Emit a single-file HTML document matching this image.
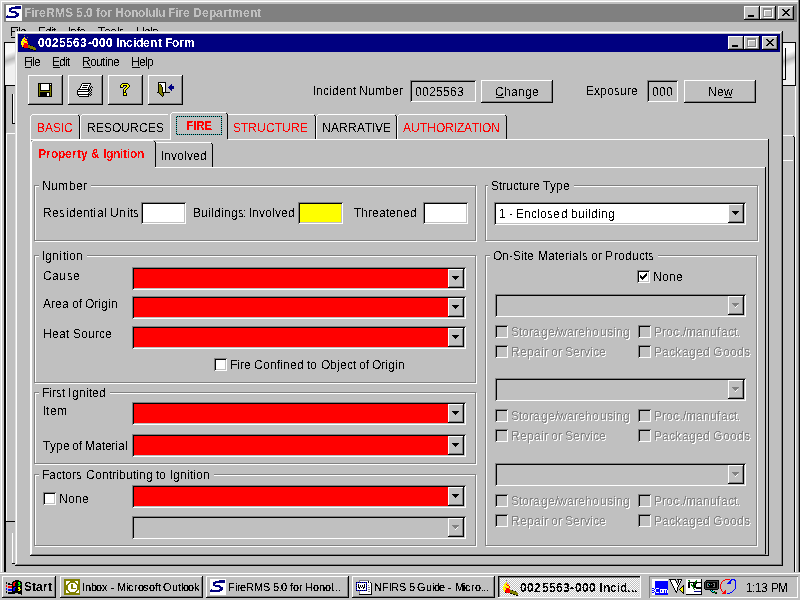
<!DOCTYPE html><html><head><meta charset="utf-8"><style>
*{margin:0;padding:0}
html,body{width:800px;height:600px;overflow:hidden;background:#c0c0c0}
body{position:relative;font-family:"Liberation Sans",sans-serif;font-size:12px}
div{position:absolute;box-sizing:border-box}
.t{white-space:nowrap;line-height:14px;height:14px;filter:url(#th)}
.t i{display:inline-block;font-style:normal;overflow:visible}
.rz{box-shadow:inset -1px -1px #000,inset 1px 1px #fff,inset -2px -2px #808080}
.sk{box-shadow:inset 1px 1px #808080,inset -1px -1px #fff,inset 2px 2px #000,inset -2px -2px #c0c0c0}
.gb{border:1px solid #808080;box-shadow:inset 1px 1px #fff,1px 1px #fff}
.ds{color:#808080;text-shadow:1px 1px #fff}
svg{position:absolute;overflow:visible}
</style></head><body><svg width="0" height="0" style="position:absolute"><filter id="th" x="-5%" y="-5%" width="110%" height="110%" color-interpolation-filters="sRGB"><feComponentTransfer><feFuncA type="discrete" tableValues="0 1"/></feComponentTransfer></filter><filter id="th2" x="-5%" y="-5%" width="110%" height="110%" color-interpolation-filters="sRGB"><feComponentTransfer><feFuncA type="discrete" tableValues="0 0 1 1 1"/></feComponentTransfer></filter></svg><div style="left:0px;top:0px;width:800px;height:1px;background:#dfdfdf;"></div>
<div style="left:0px;top:0px;width:1px;height:573px;background:#dfdfdf;"></div>
<div style="left:1px;top:1px;width:798px;height:1px;background:#fff;"></div>
<div style="left:1px;top:1px;width:1px;height:572px;background:#fff;"></div>
<div style="left:4px;top:4px;width:793px;height:18px;background:#808080;"></div>
<svg style="left:6px;top:5px" width="16" height="16" shape-rendering="crispEdges"><rect x="0" y="0" width="16" height="1" fill="#fff"/><rect x="0" y="1" width="9" height="1" fill="#fff"/><rect x="9" y="1" width="6" height="1" fill="#000080"/><rect x="15" y="1" width="1" height="1" fill="#fff"/><rect x="0" y="2" width="5" height="1" fill="#fff"/><rect x="5" y="2" width="10" height="1" fill="#000080"/><rect x="15" y="2" width="1" height="1" fill="#fff"/><rect x="0" y="3" width="3" height="1" fill="#fff"/><rect x="3" y="3" width="12" height="1" fill="#000080"/><rect x="15" y="3" width="1" height="1" fill="#fff"/><rect x="0" y="4" width="3" height="1" fill="#fff"/><rect x="3" y="4" width="3" height="1" fill="#000080"/><rect x="6" y="4" width="10" height="1" fill="#fff"/><rect x="0" y="5" width="3" height="1" fill="#fff"/><rect x="3" y="5" width="2" height="1" fill="#000080"/><rect x="5" y="5" width="11" height="1" fill="#fff"/><rect x="0" y="6" width="3" height="1" fill="#fff"/><rect x="3" y="6" width="7" height="1" fill="#000080"/><rect x="10" y="6" width="6" height="1" fill="#fff"/><rect x="0" y="7" width="5" height="1" fill="#fff"/><rect x="5" y="7" width="6" height="1" fill="#000080"/><rect x="11" y="7" width="5" height="1" fill="#fff"/><rect x="0" y="8" width="9" height="1" fill="#fff"/><rect x="9" y="8" width="4" height="1" fill="#000080"/><rect x="13" y="8" width="3" height="1" fill="#fff"/><rect x="0" y="9" width="10" height="1" fill="#fff"/><rect x="10" y="9" width="3" height="1" fill="#000080"/><rect x="13" y="9" width="3" height="1" fill="#fff"/><rect x="0" y="10" width="1" height="1" fill="#fff"/><rect x="1" y="10" width="1" height="1" fill="#000080"/><rect x="2" y="10" width="7" height="1" fill="#fff"/><rect x="9" y="10" width="4" height="1" fill="#000080"/><rect x="13" y="10" width="3" height="1" fill="#fff"/><rect x="0" y="11" width="12" height="1" fill="#000080"/><rect x="12" y="11" width="4" height="1" fill="#fff"/><rect x="0" y="12" width="10" height="1" fill="#000080"/><rect x="10" y="12" width="6" height="1" fill="#fff"/><rect x="0" y="13" width="16" height="1" fill="#fff"/><rect x="0" y="14" width="16" height="1" fill="#fff"/><rect x="0" y="15" width="16" height="1" fill="#fff"/></svg>
<div class="t " style="left:24px;top:6px;color:#c0c0c0;font-weight:bold;"><i style="width:7px">F</i><i style="width:3px">i</i><i style="width:5px">r</i><i style="width:7px">e</i><i style="width:9px">R</i><i style="width:10px">M</i><i style="width:8px">S</i><i style="width:3px">&nbsp;</i><i style="width:7px">5</i><i style="width:3px">.</i><i style="width:7px">0</i><i style="width:3px">&nbsp;</i><i style="width:4px">f</i><i style="width:7px">o</i><i style="width:5px">r</i><i style="width:3px">&nbsp;</i><i style="width:9px">H</i><i style="width:7px">o</i><i style="width:7px">n</i><i style="width:7px">o</i><i style="width:3px">l</i><i style="width:7px">u</i><i style="width:3px">l</i><i style="width:7px">u</i><i style="width:3px">&nbsp;</i><i style="width:7px">F</i><i style="width:3px">i</i><i style="width:5px">r</i><i style="width:7px">e</i><i style="width:3px">&nbsp;</i><i style="width:9px">D</i><i style="width:7px">e</i><i style="width:7px">p</i><i style="width:7px">a</i><i style="width:5px">r</i><i style="width:4px">t</i><i style="width:11px">m</i><i style="width:7px">e</i><i style="width:7px">n</i><i style="width:4px">t</i></div>
<div class="rz" style="left:744px;top:6px;width:16px;height:14px;background:#c0c0c0;"></div>
<div style="left:748px;top:15px;width:6px;height:2px;background:#000;"></div>
<div class="rz" style="left:760px;top:6px;width:16px;height:14px;background:#c0c0c0;"></div>
<div style="left:764px;top:9px;width:9px;height:9px;border:1px solid #fff;border-top-width:2px"></div>
<div style="left:763px;top:8px;width:9px;height:9px;border:1px solid #808080;border-top-width:2px"></div>
<div class="rz" style="left:778px;top:6px;width:16px;height:14px;background:#c0c0c0;"></div>
<svg style="left:782px;top:9px" width="8" height="7" shape-rendering="crispEdges"><rect x="0" y="0" width="2" height="1" fill="#000"/><rect x="6" y="0" width="2" height="1" fill="#000"/><rect x="1" y="1" width="2" height="1" fill="#000"/><rect x="5" y="1" width="2" height="1" fill="#000"/><rect x="2" y="2" width="4" height="1" fill="#000"/><rect x="3" y="3" width="2" height="1" fill="#000"/><rect x="2" y="4" width="4" height="1" fill="#000"/><rect x="1" y="5" width="2" height="1" fill="#000"/><rect x="5" y="5" width="2" height="1" fill="#000"/><rect x="0" y="6" width="2" height="1" fill="#000"/><rect x="6" y="6" width="2" height="1" fill="#000"/></svg>
<div class="t " style="left:10px;top:25px;color:#000;"><i style="width:6px">F</i><i style="width:2px">i</i><i style="width:2px">l</i><i style="width:6px">e</i></div>
<div class="t " style="left:38px;top:25px;color:#000;"><i style="width:7px">E</i><i style="width:6px">d</i><i style="width:2px">i</i><i style="width:2px">t</i></div>
<div class="t " style="left:68px;top:25px;color:#000;"><i style="width:2px">I</i><i style="width:7px">n</i><i style="width:2px">f</i><i style="width:6px">o</i></div>
<div class="t " style="left:98px;top:25px;color:#000;"><i style="width:6px">T</i><i style="width:6px">o</i><i style="width:7px">o</i><i style="width:2px">l</i><i style="width:5px">s</i></div>
<div class="t " style="left:136px;top:25px;color:#000;"><i style="width:8px">H</i><i style="width:6px">e</i><i style="width:2px">l</i><i style="width:6px">p</i></div>
<div style="left:11px;top:37px;width:6px;height:1px;background:#000;"></div>
<div style="left:4px;top:42px;width:12px;height:1px;background:#000;"></div>
<div style="left:4px;top:42px;width:1px;height:530px;background:#000;"></div>
<div style="left:5px;top:86px;width:1px;height:486px;background:#000;"></div>
<div style="left:5px;top:43px;width:11px;height:42px;background:linear-gradient(160deg,#f4f4f4 0%,#fafafa 25%,#b8b8b8 40%,#f0f0f0 55%,#f0f0f0 100%)"></div>
<div style="left:4px;top:85px;width:12px;height:1px;background:#000;"></div>
<div style="left:6px;top:133px;width:1px;height:388px;background:#fff;"></div>
<div style="left:6px;top:133px;width:10px;height:1px;background:#fff;"></div>
<div style="left:6px;top:521px;width:10px;height:1px;background:#000;"></div>
<div style="left:12px;top:94px;width:1px;height:29px;background:#000;"></div>
<div style="left:13px;top:94px;width:1px;height:29px;background:#fff;"></div>
<div style="left:12px;top:123px;width:3px;height:1px;background:#000;"></div>
<div style="left:12px;top:533px;width:1px;height:30px;background:#fff;"></div>
<div style="left:12px;top:563px;width:3px;height:1px;background:#000;"></div>
<div style="left:783px;top:42px;width:13px;height:1px;background:#000;"></div>
<div style="left:795px;top:42px;width:1px;height:44px;background:#000;"></div>
<div style="left:783px;top:85px;width:12px;height:1px;background:#000;"></div>
<div style="left:783px;top:43px;width:12px;height:42px;background:linear-gradient(160deg,#f4f4f4 0%,#fafafa 25%,#b8b8b8 40%,#f0f0f0 55%,#f0f0f0 100%)"></div>
<div style="left:785px;top:48px;width:1px;height:32px;background:#000;"></div>
<div style="left:783px;top:79px;width:3px;height:1px;background:#000;"></div>
<div style="left:795px;top:86px;width:1px;height:51px;background:#fff;"></div>
<div style="left:783px;top:135px;width:10px;height:1px;background:#fff;"></div>
<div style="left:793px;top:136px;width:1px;height:1px;background:#000;"></div>
<div style="left:794px;top:137px;width:1px;height:435px;background:#000;"></div>
<div style="left:795px;top:137px;width:1px;height:435px;background:#fff;"></div>
<div style="left:783px;top:160px;width:10px;height:1px;background:#fff;"></div>
<div style="left:798px;top:0px;width:1px;height:573px;background:#808080;"></div>
<div style="left:799px;top:0px;width:1px;height:573px;background:#000;"></div>
<div style="left:15px;top:31px;width:768px;height:535px;background:#c0c0c0;"></div>
<div style="left:15px;top:31px;width:767px;height:1px;background:#dfdfdf;"></div>
<div style="left:15px;top:31px;width:1px;height:534px;background:#dfdfdf;"></div>
<div style="left:16px;top:32px;width:765px;height:1px;background:#fff;"></div>
<div style="left:16px;top:32px;width:1px;height:532px;background:#fff;"></div>
<div style="left:781px;top:32px;width:1px;height:533px;background:#808080;"></div>
<div style="left:16px;top:564px;width:766px;height:1px;background:#808080;"></div>
<div style="left:782px;top:31px;width:1px;height:535px;background:#000;"></div>
<div style="left:15px;top:565px;width:768px;height:1px;background:#000;"></div>
<div style="left:18px;top:34px;width:762px;height:18px;background:#000080;"></div>
<svg style="left:20px;top:34px" width="16" height="17" shape-rendering="crispEdges"><rect x="4" y="1" width="1" height="1" fill="#808080"/><rect x="4" y="3" width="1" height="1" fill="#ff0"/><rect x="7" y="3" width="1" height="1" fill="#808080"/><rect x="3" y="4" width="2" height="1" fill="#ff0"/><rect x="5" y="4" width="1" height="1" fill="#f0f"/><rect x="2" y="5" width="2" height="1" fill="#ff0"/><rect x="4" y="5" width="1" height="1" fill="#f00"/><rect x="5" y="5" width="2" height="1" fill="#ff0"/><rect x="2" y="6" width="3" height="1" fill="#ff0"/><rect x="5" y="6" width="2" height="1" fill="#f00"/><rect x="1" y="7" width="6" height="1" fill="#ff0"/><rect x="7" y="7" width="1" height="1" fill="#f00"/><rect x="1" y="8" width="2" height="1" fill="#ff0"/><rect x="3" y="8" width="1" height="1" fill="#f0f"/><rect x="4" y="8" width="3" height="1" fill="#ff0"/><rect x="7" y="8" width="1" height="1" fill="#f00"/><rect x="1" y="9" width="3" height="1" fill="#ff0"/><rect x="4" y="9" width="3" height="1" fill="#f00"/><rect x="7" y="9" width="1" height="1" fill="#ff0"/><rect x="1" y="10" width="3" height="1" fill="#ff0"/><rect x="4" y="10" width="4" height="1" fill="#f00"/><rect x="2" y="11" width="1" height="1" fill="#ff0"/><rect x="3" y="11" width="5" height="1" fill="#f00"/><rect x="8" y="11" width="2" height="1" fill="#808000"/><rect x="10" y="11" width="1" height="1" fill="#000"/><rect x="2" y="12" width="1" height="1" fill="#ff0"/><rect x="3" y="12" width="5" height="1" fill="#f00"/><rect x="8" y="12" width="5" height="1" fill="#808000"/><rect x="13" y="12" width="1" height="1" fill="#000"/><rect x="3" y="13" width="1" height="1" fill="#000"/><rect x="4" y="13" width="4" height="1" fill="#f00"/><rect x="8" y="13" width="7" height="1" fill="#808000"/><rect x="8" y="14" width="2" height="1" fill="#000"/><rect x="10" y="14" width="6" height="1" fill="#808000"/><rect x="11" y="15" width="2" height="1" fill="#000"/><rect x="13" y="15" width="3" height="1" fill="#808000"/><rect x="14" y="16" width="2" height="1" fill="#000"/></svg>
<div class="t " style="left:38px;top:36px;color:#fff;font-weight:bold;"><i style="width:7px">0</i><i style="width:7px">0</i><i style="width:7px">2</i><i style="width:7px">5</i><i style="width:7px">5</i><i style="width:7px">6</i><i style="width:8px">3</i><i style="width:4px">-</i><i style="width:7px">0</i><i style="width:7px">0</i><i style="width:7px">0</i><i style="width:3px">&nbsp;</i><i style="width:3px">I</i><i style="width:7px">n</i><i style="width:7px">c</i><i style="width:3px">i</i><i style="width:7px">d</i><i style="width:7px">e</i><i style="width:8px">n</i><i style="width:4px">t</i><i style="width:3px">&nbsp;</i><i style="width:7px">F</i><i style="width:7px">o</i><i style="width:5px">r</i><i style="width:11px">m</i></div>
<div class="rz" style="left:728px;top:36px;width:16px;height:14px;background:#c0c0c0;"></div>
<div style="left:732px;top:45px;width:6px;height:2px;background:#000;"></div>
<div class="rz" style="left:744px;top:36px;width:16px;height:14px;background:#c0c0c0;"></div>
<div style="left:748px;top:39px;width:9px;height:9px;border:1px solid #fff;border-top-width:2px"></div>
<div style="left:747px;top:38px;width:9px;height:9px;border:1px solid #808080;border-top-width:2px"></div>
<div class="rz" style="left:762px;top:36px;width:16px;height:14px;background:#c0c0c0;"></div>
<svg style="left:766px;top:39px" width="8" height="7" shape-rendering="crispEdges"><rect x="0" y="0" width="2" height="1" fill="#000"/><rect x="6" y="0" width="2" height="1" fill="#000"/><rect x="1" y="1" width="2" height="1" fill="#000"/><rect x="5" y="1" width="2" height="1" fill="#000"/><rect x="2" y="2" width="4" height="1" fill="#000"/><rect x="3" y="3" width="2" height="1" fill="#000"/><rect x="2" y="4" width="4" height="1" fill="#000"/><rect x="1" y="5" width="2" height="1" fill="#000"/><rect x="5" y="5" width="2" height="1" fill="#000"/><rect x="0" y="6" width="2" height="1" fill="#000"/><rect x="6" y="6" width="2" height="1" fill="#000"/></svg>
<div class="t " style="left:24px;top:55px;color:#000;"><i style="width:6px">F</i><i style="width:2px">i</i><i style="width:2px">l</i><i style="width:6px">e</i></div>
<div style="left:25px;top:67px;width:6px;height:1px;background:#000;"></div>
<div class="t " style="left:52px;top:55px;color:#000;"><i style="width:7px">E</i><i style="width:6px">d</i><i style="width:2px">i</i><i style="width:2px">t</i></div>
<div style="left:53px;top:67px;width:7px;height:1px;background:#000;"></div>
<div class="t " style="left:82px;top:55px;color:#000;"><i style="width:8px">R</i><i style="width:6px">o</i><i style="width:6px">u</i><i style="width:3px">t</i><i style="width:2px">i</i><i style="width:6px">n</i><i style="width:6px">e</i></div>
<div style="left:83px;top:67px;width:8px;height:1px;background:#000;"></div>
<div class="t " style="left:131px;top:55px;color:#000;"><i style="width:8px">H</i><i style="width:6px">e</i><i style="width:2px">l</i><i style="width:6px">p</i></div>
<div style="left:132px;top:67px;width:8px;height:1px;background:#000;"></div>
<div class="rz" style="left:28px;top:75px;width:35px;height:30px;background:#c0c0c0;"></div>
<div class="rz" style="left:68px;top:75px;width:35px;height:30px;background:#c0c0c0;"></div>
<div class="rz" style="left:108px;top:75px;width:35px;height:30px;background:#c0c0c0;"></div>
<div class="rz" style="left:148px;top:75px;width:35px;height:30px;background:#c0c0c0;"></div>
<svg style="left:38px;top:83px" width="14" height="14" shape-rendering="crispEdges"><rect x="0" y="0" width="14" height="1" fill="#000"/><rect x="0" y="1" width="1" height="1" fill="#000"/><rect x="1" y="1" width="1" height="1" fill="#808000"/><rect x="2" y="1" width="1" height="1" fill="#000"/><rect x="3" y="1" width="8" height="1" fill="#fff"/><rect x="11" y="1" width="1" height="1" fill="#000"/><rect x="12" y="1" width="1" height="1" fill="#fff"/><rect x="13" y="1" width="1" height="1" fill="#000"/><rect x="0" y="2" width="1" height="1" fill="#000"/><rect x="1" y="2" width="1" height="1" fill="#808000"/><rect x="2" y="2" width="1" height="1" fill="#000"/><rect x="3" y="2" width="8" height="1" fill="#fff"/><rect x="11" y="2" width="3" height="1" fill="#000"/><rect x="0" y="3" width="1" height="1" fill="#000"/><rect x="1" y="3" width="1" height="1" fill="#808000"/><rect x="2" y="3" width="1" height="1" fill="#000"/><rect x="3" y="3" width="8" height="1" fill="#fff"/><rect x="11" y="3" width="1" height="1" fill="#000"/><rect x="12" y="3" width="1" height="1" fill="#808000"/><rect x="13" y="3" width="1" height="1" fill="#000"/><rect x="0" y="4" width="1" height="1" fill="#000"/><rect x="1" y="4" width="1" height="1" fill="#808000"/><rect x="2" y="4" width="1" height="1" fill="#000"/><rect x="3" y="4" width="8" height="1" fill="#fff"/><rect x="11" y="4" width="1" height="1" fill="#000"/><rect x="12" y="4" width="1" height="1" fill="#808000"/><rect x="13" y="4" width="1" height="1" fill="#000"/><rect x="0" y="5" width="1" height="1" fill="#000"/><rect x="1" y="5" width="1" height="1" fill="#808000"/><rect x="2" y="5" width="1" height="1" fill="#000"/><rect x="3" y="5" width="8" height="1" fill="#fff"/><rect x="11" y="5" width="1" height="1" fill="#000"/><rect x="12" y="5" width="1" height="1" fill="#808000"/><rect x="13" y="5" width="1" height="1" fill="#000"/><rect x="0" y="6" width="1" height="1" fill="#000"/><rect x="1" y="6" width="1" height="1" fill="#808000"/><rect x="2" y="6" width="1" height="1" fill="#000"/><rect x="3" y="6" width="8" height="1" fill="#fff"/><rect x="11" y="6" width="1" height="1" fill="#000"/><rect x="12" y="6" width="1" height="1" fill="#808000"/><rect x="13" y="6" width="1" height="1" fill="#000"/><rect x="0" y="7" width="1" height="1" fill="#000"/><rect x="1" y="7" width="1" height="1" fill="#808000"/><rect x="2" y="7" width="10" height="1" fill="#000"/><rect x="12" y="7" width="1" height="1" fill="#808000"/><rect x="13" y="7" width="1" height="1" fill="#000"/><rect x="0" y="8" width="1" height="1" fill="#000"/><rect x="1" y="8" width="12" height="1" fill="#808000"/><rect x="13" y="8" width="1" height="1" fill="#000"/><rect x="0" y="9" width="1" height="1" fill="#000"/><rect x="1" y="9" width="1" height="1" fill="#808000"/><rect x="2" y="9" width="10" height="1" fill="#000"/><rect x="12" y="9" width="1" height="1" fill="#808000"/><rect x="13" y="9" width="1" height="1" fill="#000"/><rect x="0" y="10" width="1" height="1" fill="#000"/><rect x="1" y="10" width="1" height="1" fill="#808000"/><rect x="2" y="10" width="7" height="1" fill="#000"/><rect x="9" y="10" width="2" height="1" fill="#fff"/><rect x="11" y="10" width="1" height="1" fill="#000"/><rect x="12" y="10" width="1" height="1" fill="#808000"/><rect x="13" y="10" width="1" height="1" fill="#000"/><rect x="0" y="11" width="1" height="1" fill="#000"/><rect x="1" y="11" width="1" height="1" fill="#808000"/><rect x="2" y="11" width="7" height="1" fill="#000"/><rect x="9" y="11" width="2" height="1" fill="#fff"/><rect x="11" y="11" width="1" height="1" fill="#000"/><rect x="12" y="11" width="1" height="1" fill="#808000"/><rect x="13" y="11" width="1" height="1" fill="#000"/><rect x="0" y="12" width="1" height="1" fill="#000"/><rect x="1" y="12" width="1" height="1" fill="#808000"/><rect x="2" y="12" width="7" height="1" fill="#000"/><rect x="9" y="12" width="2" height="1" fill="#fff"/><rect x="11" y="12" width="1" height="1" fill="#000"/><rect x="12" y="12" width="1" height="1" fill="#808000"/><rect x="13" y="12" width="1" height="1" fill="#000"/><rect x="0" y="13" width="14" height="1" fill="#000"/></svg>
<svg style="left:77px;top:83px" width="16" height="14" shape-rendering="crispEdges"><rect x="5" y="0" width="9" height="1" fill="#000"/><rect x="4" y="1" width="1" height="1" fill="#000"/><rect x="5" y="1" width="8" height="1" fill="#fff"/><rect x="13" y="1" width="1" height="1" fill="#000"/><rect x="4" y="2" width="1" height="1" fill="#000"/><rect x="5" y="2" width="1" height="1" fill="#fff"/><rect x="6" y="2" width="5" height="1" fill="#000"/><rect x="11" y="2" width="1" height="1" fill="#fff"/><rect x="12" y="2" width="1" height="1" fill="#000"/><rect x="3" y="3" width="1" height="1" fill="#000"/><rect x="4" y="3" width="8" height="1" fill="#fff"/><rect x="12" y="3" width="1" height="1" fill="#000"/><rect x="14" y="3" width="1" height="1" fill="#000"/><rect x="3" y="4" width="1" height="1" fill="#000"/><rect x="4" y="4" width="1" height="1" fill="#fff"/><rect x="5" y="4" width="5" height="1" fill="#000"/><rect x="10" y="4" width="1" height="1" fill="#fff"/><rect x="11" y="4" width="1" height="1" fill="#000"/><rect x="13" y="4" width="1" height="1" fill="#000"/><rect x="15" y="4" width="1" height="1" fill="#000"/><rect x="2" y="5" width="1" height="1" fill="#000"/><rect x="3" y="5" width="8" height="1" fill="#fff"/><rect x="11" y="5" width="1" height="1" fill="#000"/><rect x="13" y="5" width="1" height="1" fill="#000"/><rect x="1" y="6" width="12" height="1" fill="#000"/><rect x="14" y="6" width="1" height="1" fill="#000"/><rect x="0" y="7" width="1" height="1" fill="#000"/><rect x="1" y="7" width="10" height="1" fill="#fff"/><rect x="11" y="7" width="2" height="1" fill="#000"/><rect x="14" y="7" width="1" height="1" fill="#000"/><rect x="0" y="8" width="12" height="1" fill="#000"/><rect x="13" y="8" width="1" height="1" fill="#000"/><rect x="0" y="9" width="1" height="1" fill="#000"/><rect x="1" y="9" width="11" height="1" fill="#fff"/><rect x="12" y="9" width="1" height="1" fill="#000"/><rect x="14" y="9" width="1" height="1" fill="#000"/><rect x="0" y="10" width="1" height="1" fill="#000"/><rect x="1" y="10" width="10" height="1" fill="#fff"/><rect x="11" y="10" width="1" height="1" fill="#000"/><rect x="13" y="10" width="1" height="1" fill="#000"/><rect x="0" y="11" width="13" height="1" fill="#000"/><rect x="14" y="11" width="1" height="1" fill="#000"/><rect x="1" y="12" width="1" height="1" fill="#000"/><rect x="2" y="12" width="9" height="1" fill="#fff"/><rect x="11" y="12" width="1" height="1" fill="#000"/><rect x="13" y="12" width="1" height="1" fill="#000"/><rect x="2" y="13" width="10" height="1" fill="#000"/></svg>
<svg style="left:120px;top:83px" width="10" height="13" shape-rendering="crispEdges"><rect x="2" y="0" width="6" height="1" fill="#000"/><rect x="1" y="1" width="1" height="1" fill="#000"/><rect x="2" y="1" width="6" height="1" fill="#ff0"/><rect x="8" y="1" width="1" height="1" fill="#000"/><rect x="0" y="2" width="1" height="1" fill="#000"/><rect x="1" y="2" width="2" height="1" fill="#ff0"/><rect x="3" y="2" width="4" height="1" fill="#000"/><rect x="7" y="2" width="2" height="1" fill="#ff0"/><rect x="9" y="2" width="1" height="1" fill="#000"/><rect x="0" y="3" width="1" height="1" fill="#000"/><rect x="1" y="3" width="2" height="1" fill="#ff0"/><rect x="3" y="3" width="1" height="1" fill="#000"/><rect x="6" y="3" width="1" height="1" fill="#000"/><rect x="7" y="3" width="2" height="1" fill="#ff0"/><rect x="9" y="3" width="1" height="1" fill="#000"/><rect x="0" y="4" width="3" height="1" fill="#000"/><rect x="5" y="4" width="1" height="1" fill="#000"/><rect x="6" y="4" width="2" height="1" fill="#ff0"/><rect x="8" y="4" width="1" height="1" fill="#000"/><rect x="4" y="5" width="1" height="1" fill="#000"/><rect x="5" y="5" width="2" height="1" fill="#ff0"/><rect x="7" y="5" width="1" height="1" fill="#000"/><rect x="3" y="6" width="1" height="1" fill="#000"/><rect x="4" y="6" width="2" height="1" fill="#ff0"/><rect x="6" y="6" width="1" height="1" fill="#000"/><rect x="3" y="7" width="1" height="1" fill="#000"/><rect x="4" y="7" width="1" height="1" fill="#ff0"/><rect x="5" y="7" width="1" height="1" fill="#000"/><rect x="3" y="8" width="1" height="1" fill="#000"/><rect x="4" y="8" width="1" height="1" fill="#ff0"/><rect x="5" y="8" width="1" height="1" fill="#000"/><rect x="3" y="9" width="3" height="1" fill="#000"/><rect x="3" y="10" width="1" height="1" fill="#000"/><rect x="4" y="10" width="2" height="1" fill="#ff0"/><rect x="6" y="10" width="1" height="1" fill="#000"/><rect x="3" y="11" width="1" height="1" fill="#000"/><rect x="4" y="11" width="2" height="1" fill="#ff0"/><rect x="6" y="11" width="1" height="1" fill="#000"/><rect x="3" y="12" width="4" height="1" fill="#000"/></svg>
<svg style="left:157px;top:82px" width="17" height="15" shape-rendering="crispEdges"><rect x="1" y="0" width="8" height="1" fill="#000"/><rect x="1" y="1" width="1" height="1" fill="#000"/><rect x="2" y="1" width="6" height="1" fill="#fff"/><rect x="8" y="1" width="1" height="1" fill="#000"/><rect x="1" y="2" width="1" height="1" fill="#000"/><rect x="2" y="2" width="1" height="1" fill="#808000"/><rect x="3" y="2" width="1" height="1" fill="#000"/><rect x="4" y="2" width="4" height="1" fill="#fff"/><rect x="8" y="2" width="1" height="1" fill="#000"/><rect x="14" y="2" width="1" height="1" fill="#000080"/><rect x="1" y="3" width="1" height="1" fill="#000"/><rect x="2" y="3" width="2" height="1" fill="#808000"/><rect x="4" y="3" width="1" height="1" fill="#000"/><rect x="5" y="3" width="3" height="1" fill="#fff"/><rect x="8" y="3" width="1" height="1" fill="#000"/><rect x="13" y="3" width="2" height="1" fill="#000080"/><rect x="1" y="4" width="1" height="1" fill="#000"/><rect x="2" y="4" width="2" height="1" fill="#808000"/><rect x="4" y="4" width="1" height="1" fill="#000"/><rect x="5" y="4" width="3" height="1" fill="#fff"/><rect x="8" y="4" width="1" height="1" fill="#000"/><rect x="12" y="4" width="5" height="1" fill="#000080"/><rect x="1" y="5" width="1" height="1" fill="#000"/><rect x="2" y="5" width="3" height="1" fill="#808000"/><rect x="5" y="5" width="1" height="1" fill="#000"/><rect x="6" y="5" width="2" height="1" fill="#fff"/><rect x="8" y="5" width="1" height="1" fill="#000"/><rect x="11" y="5" width="6" height="1" fill="#000080"/><rect x="1" y="6" width="1" height="1" fill="#000"/><rect x="2" y="6" width="3" height="1" fill="#808000"/><rect x="5" y="6" width="1" height="1" fill="#000"/><rect x="6" y="6" width="2" height="1" fill="#fff"/><rect x="8" y="6" width="1" height="1" fill="#000"/><rect x="12" y="6" width="5" height="1" fill="#000080"/><rect x="1" y="7" width="1" height="1" fill="#000"/><rect x="2" y="7" width="3" height="1" fill="#808000"/><rect x="5" y="7" width="1" height="1" fill="#000"/><rect x="6" y="7" width="2" height="1" fill="#fff"/><rect x="8" y="7" width="1" height="1" fill="#000"/><rect x="13" y="7" width="2" height="1" fill="#000080"/><rect x="1" y="8" width="1" height="1" fill="#000"/><rect x="2" y="8" width="3" height="1" fill="#808000"/><rect x="5" y="8" width="1" height="1" fill="#000"/><rect x="6" y="8" width="2" height="1" fill="#fff"/><rect x="8" y="8" width="1" height="1" fill="#000"/><rect x="14" y="8" width="1" height="1" fill="#000080"/><rect x="1" y="9" width="1" height="1" fill="#000"/><rect x="2" y="9" width="3" height="1" fill="#808000"/><rect x="5" y="9" width="1" height="1" fill="#000"/><rect x="6" y="9" width="2" height="1" fill="#fff"/><rect x="8" y="9" width="1" height="1" fill="#000"/><rect x="0" y="10" width="2" height="1" fill="#000"/><rect x="2" y="10" width="3" height="1" fill="#808000"/><rect x="5" y="10" width="8" height="1" fill="#000"/><rect x="2" y="11" width="1" height="1" fill="#000"/><rect x="3" y="11" width="3" height="1" fill="#808000"/><rect x="6" y="11" width="1" height="1" fill="#000"/><rect x="3" y="12" width="1" height="1" fill="#000"/><rect x="4" y="12" width="2" height="1" fill="#808000"/><rect x="6" y="12" width="1" height="1" fill="#000"/><rect x="4" y="13" width="1" height="1" fill="#000"/><rect x="5" y="13" width="1" height="1" fill="#808000"/><rect x="6" y="13" width="1" height="1" fill="#000"/><rect x="5" y="14" width="1" height="1" fill="#000"/></svg>
<div class="t " style="left:313px;top:84px;color:#000;"><i style="width:3px">I</i><i style="width:7px">n</i><i style="width:6px">c</i><i style="width:3px">i</i><i style="width:7px">d</i><i style="width:7px">e</i><i style="width:7px">n</i><i style="width:3px">t</i><i style="width:3px">&nbsp;</i><i style="width:9px">N</i><i style="width:7px">u</i><i style="width:10px">m</i><i style="width:7px">b</i><i style="width:7px">e</i><i style="width:4px">r</i></div>
<div class="sk" style="left:410px;top:80px;width:66px;height:22px;background:#c0c0c0;"></div>
<div class="t " style="left:415px;top:85px;color:#000;"><i style="width:7px">0</i><i style="width:7px">0</i><i style="width:7px">2</i><i style="width:7px">5</i><i style="width:7px">5</i><i style="width:7px">6</i><i style="width:7px">3</i></div>
<div class="rz" style="left:481px;top:80px;width:72px;height:23px;background:#c0c0c0;"></div>
<div class="t " style="left:495px;top:85px;color:#000;"><i style="width:9px">C</i><i style="width:7px">h</i><i style="width:7px">a</i><i style="width:7px">n</i><i style="width:7px">g</i><i style="width:7px">e</i></div>
<div style="left:496px;top:97px;width:8px;height:1px;background:#000;"></div>
<div class="t " style="left:586px;top:84px;color:#000;"><i style="width:8px">E</i><i style="width:6px">x</i><i style="width:7px">p</i><i style="width:7px">o</i><i style="width:6px">s</i><i style="width:7px">u</i><i style="width:4px">r</i><i style="width:7px">e</i></div>
<div class="sk" style="left:647px;top:80px;width:31px;height:22px;background:#c0c0c0;"></div>
<div class="t " style="left:652px;top:85px;color:#000;"><i style="width:7px">0</i><i style="width:7px">0</i><i style="width:7px">0</i></div>
<div class="rz" style="left:684px;top:80px;width:72px;height:23px;background:#c0c0c0;"></div>
<div class="t " style="left:708px;top:85px;color:#000;"><i style="width:9px">N</i><i style="width:7px">e</i><i style="width:9px">w</i></div>
<div style="left:724px;top:97px;width:8px;height:1px;background:#000;"></div>
<div style="left:30px;top:139px;width:738px;height:1px;background:#fff;"></div>
<div style="left:30px;top:139px;width:1px;height:416px;background:#fff;"></div>
<div style="left:768px;top:139px;width:1px;height:417px;background:#000;"></div>
<div style="left:30px;top:555px;width:739px;height:1px;background:#000;"></div>
<div style="left:30px;top:116px;width:1px;height:23px;background:#fff;"></div>
<div style="left:31px;top:115px;width:1px;height:1px;background:#fff;"></div>
<div style="left:32px;top:114px;width:46px;height:1px;background:#fff;"></div>
<div style="left:78px;top:115px;width:1px;height:1px;background:#000;"></div>
<div style="left:79px;top:116px;width:1px;height:23px;background:#000;"></div>
<div class="t " style="left:37px;top:121px;color:#f00;"><i style="width:8px">B</i><i style="width:8px">A</i><i style="width:8px">S</i><i style="width:3px">I</i><i style="width:9px">C</i></div>
<div style="left:80px;top:116px;width:1px;height:23px;background:#fff;"></div>
<div style="left:81px;top:115px;width:1px;height:1px;background:#fff;"></div>
<div style="left:82px;top:114px;width:86px;height:1px;background:#fff;"></div>
<div style="left:168px;top:115px;width:1px;height:1px;background:#000;"></div>
<div style="left:169px;top:116px;width:1px;height:23px;background:#000;"></div>
<div class="t " style="left:87px;top:121px;color:#000;"><i style="width:9px">R</i><i style="width:8px">E</i><i style="width:8px">S</i><i style="width:9px">O</i><i style="width:9px">U</i><i style="width:9px">R</i><i style="width:9px">C</i><i style="width:8px">E</i><i style="width:8px">S</i></div>
<div style="left:228px;top:114px;width:86px;height:1px;background:#fff;"></div>
<div style="left:314px;top:115px;width:1px;height:1px;background:#000;"></div>
<div style="left:315px;top:116px;width:1px;height:23px;background:#000;"></div>
<div class="t " style="left:233px;top:121px;color:#f00;"><i style="width:8px">S</i><i style="width:7px">T</i><i style="width:9px">R</i><i style="width:9px">U</i><i style="width:9px">C</i><i style="width:7px">T</i><i style="width:9px">U</i><i style="width:9px">R</i><i style="width:8px">E</i></div>
<div style="left:316px;top:116px;width:1px;height:23px;background:#fff;"></div>
<div style="left:317px;top:115px;width:1px;height:1px;background:#fff;"></div>
<div style="left:318px;top:114px;width:77px;height:1px;background:#fff;"></div>
<div style="left:395px;top:115px;width:1px;height:1px;background:#000;"></div>
<div style="left:396px;top:116px;width:1px;height:23px;background:#000;"></div>
<div class="t " style="left:322px;top:121px;color:#000;"><i style="width:9px">N</i><i style="width:8px">A</i><i style="width:9px">R</i><i style="width:9px">R</i><i style="width:8px">A</i><i style="width:7px">T</i><i style="width:3px">I</i><i style="width:8px">V</i><i style="width:8px">E</i></div>
<div style="left:397px;top:116px;width:1px;height:23px;background:#fff;"></div>
<div style="left:398px;top:115px;width:1px;height:1px;background:#fff;"></div>
<div style="left:399px;top:114px;width:106px;height:1px;background:#fff;"></div>
<div style="left:505px;top:115px;width:1px;height:1px;background:#000;"></div>
<div style="left:506px;top:116px;width:1px;height:23px;background:#000;"></div>
<div class="t " style="left:403px;top:121px;color:#f00;"><i style="width:8px">A</i><i style="width:9px">U</i><i style="width:7px">T</i><i style="width:9px">H</i><i style="width:9px">O</i><i style="width:9px">R</i><i style="width:3px">I</i><i style="width:7px">Z</i><i style="width:8px">A</i><i style="width:7px">T</i><i style="width:3px">I</i><i style="width:9px">O</i><i style="width:9px">N</i></div>
<div style="left:168px;top:113px;width:60px;height:27px;background:#c0c0c0;"></div>
<div style="left:30px;top:139px;width:141px;height:1px;background:#fff;"></div>
<div style="left:228px;top:139px;width:540px;height:1px;background:#fff;"></div>
<div style="left:170px;top:114px;width:1px;height:26px;background:#fff;"></div>
<div style="left:171px;top:113px;width:1px;height:1px;background:#fff;"></div>
<div style="left:172px;top:112px;width:54px;height:1px;background:#fff;"></div>
<div style="left:226px;top:113px;width:1px;height:1px;background:#000;"></div>
<div style="left:227px;top:114px;width:1px;height:25px;background:#000;"></div>
<div style="left:228px;top:114px;width:3px;height:1px;background:#fff;"></div>
<div class="t " style="left:186px;top:119px;color:#f00;font-weight:bold;"><i style="width:7px">F</i><i style="width:3px">I</i><i style="width:8px">R</i><i style="width:7px">E</i></div>
<svg style="left:176px;top:116px" width="46" height="19" shape-rendering="crispEdges"><rect x="0" y="0" width="1" height="1" fill="#40c8c8"/><rect x="1" y="0" width="1" height="1" fill="#000"/><rect x="2" y="0" width="1" height="1" fill="#40c8c8"/><rect x="3" y="0" width="1" height="1" fill="#000"/><rect x="4" y="0" width="1" height="1" fill="#40c8c8"/><rect x="5" y="0" width="1" height="1" fill="#000"/><rect x="6" y="0" width="1" height="1" fill="#40c8c8"/><rect x="7" y="0" width="1" height="1" fill="#000"/><rect x="8" y="0" width="1" height="1" fill="#40c8c8"/><rect x="9" y="0" width="1" height="1" fill="#000"/><rect x="10" y="0" width="1" height="1" fill="#40c8c8"/><rect x="11" y="0" width="1" height="1" fill="#000"/><rect x="12" y="0" width="1" height="1" fill="#40c8c8"/><rect x="13" y="0" width="1" height="1" fill="#000"/><rect x="14" y="0" width="1" height="1" fill="#40c8c8"/><rect x="15" y="0" width="1" height="1" fill="#000"/><rect x="16" y="0" width="1" height="1" fill="#40c8c8"/><rect x="17" y="0" width="1" height="1" fill="#000"/><rect x="18" y="0" width="1" height="1" fill="#40c8c8"/><rect x="19" y="0" width="1" height="1" fill="#000"/><rect x="20" y="0" width="1" height="1" fill="#40c8c8"/><rect x="21" y="0" width="1" height="1" fill="#000"/><rect x="22" y="0" width="1" height="1" fill="#40c8c8"/><rect x="23" y="0" width="1" height="1" fill="#000"/><rect x="24" y="0" width="1" height="1" fill="#40c8c8"/><rect x="25" y="0" width="1" height="1" fill="#000"/><rect x="26" y="0" width="1" height="1" fill="#40c8c8"/><rect x="27" y="0" width="1" height="1" fill="#000"/><rect x="28" y="0" width="1" height="1" fill="#40c8c8"/><rect x="29" y="0" width="1" height="1" fill="#000"/><rect x="30" y="0" width="1" height="1" fill="#40c8c8"/><rect x="31" y="0" width="1" height="1" fill="#000"/><rect x="32" y="0" width="1" height="1" fill="#40c8c8"/><rect x="33" y="0" width="1" height="1" fill="#000"/><rect x="34" y="0" width="1" height="1" fill="#40c8c8"/><rect x="35" y="0" width="1" height="1" fill="#000"/><rect x="36" y="0" width="1" height="1" fill="#40c8c8"/><rect x="37" y="0" width="1" height="1" fill="#000"/><rect x="38" y="0" width="1" height="1" fill="#40c8c8"/><rect x="39" y="0" width="1" height="1" fill="#000"/><rect x="40" y="0" width="1" height="1" fill="#40c8c8"/><rect x="41" y="0" width="1" height="1" fill="#000"/><rect x="42" y="0" width="1" height="1" fill="#40c8c8"/><rect x="43" y="0" width="1" height="1" fill="#000"/><rect x="44" y="0" width="1" height="1" fill="#40c8c8"/><rect x="45" y="0" width="1" height="1" fill="#000"/><rect x="0" y="1" width="1" height="1" fill="#000"/><rect x="45" y="1" width="1" height="1" fill="#40c8c8"/><rect x="0" y="2" width="1" height="1" fill="#40c8c8"/><rect x="45" y="2" width="1" height="1" fill="#000"/><rect x="0" y="3" width="1" height="1" fill="#000"/><rect x="45" y="3" width="1" height="1" fill="#40c8c8"/><rect x="0" y="4" width="1" height="1" fill="#40c8c8"/><rect x="45" y="4" width="1" height="1" fill="#000"/><rect x="0" y="5" width="1" height="1" fill="#000"/><rect x="45" y="5" width="1" height="1" fill="#40c8c8"/><rect x="0" y="6" width="1" height="1" fill="#40c8c8"/><rect x="45" y="6" width="1" height="1" fill="#000"/><rect x="0" y="7" width="1" height="1" fill="#000"/><rect x="45" y="7" width="1" height="1" fill="#40c8c8"/><rect x="0" y="8" width="1" height="1" fill="#40c8c8"/><rect x="45" y="8" width="1" height="1" fill="#000"/><rect x="0" y="9" width="1" height="1" fill="#000"/><rect x="45" y="9" width="1" height="1" fill="#40c8c8"/><rect x="0" y="10" width="1" height="1" fill="#40c8c8"/><rect x="45" y="10" width="1" height="1" fill="#000"/><rect x="0" y="11" width="1" height="1" fill="#000"/><rect x="45" y="11" width="1" height="1" fill="#40c8c8"/><rect x="0" y="12" width="1" height="1" fill="#40c8c8"/><rect x="45" y="12" width="1" height="1" fill="#000"/><rect x="0" y="13" width="1" height="1" fill="#000"/><rect x="45" y="13" width="1" height="1" fill="#40c8c8"/><rect x="0" y="14" width="1" height="1" fill="#40c8c8"/><rect x="45" y="14" width="1" height="1" fill="#000"/><rect x="0" y="15" width="1" height="1" fill="#000"/><rect x="45" y="15" width="1" height="1" fill="#40c8c8"/><rect x="0" y="16" width="1" height="1" fill="#40c8c8"/><rect x="45" y="16" width="1" height="1" fill="#000"/><rect x="0" y="17" width="1" height="1" fill="#000"/><rect x="45" y="17" width="1" height="1" fill="#40c8c8"/><rect x="0" y="18" width="1" height="1" fill="#40c8c8"/><rect x="1" y="18" width="1" height="1" fill="#000"/><rect x="2" y="18" width="1" height="1" fill="#40c8c8"/><rect x="3" y="18" width="1" height="1" fill="#000"/><rect x="4" y="18" width="1" height="1" fill="#40c8c8"/><rect x="5" y="18" width="1" height="1" fill="#000"/><rect x="6" y="18" width="1" height="1" fill="#40c8c8"/><rect x="7" y="18" width="1" height="1" fill="#000"/><rect x="8" y="18" width="1" height="1" fill="#40c8c8"/><rect x="9" y="18" width="1" height="1" fill="#000"/><rect x="10" y="18" width="1" height="1" fill="#40c8c8"/><rect x="11" y="18" width="1" height="1" fill="#000"/><rect x="12" y="18" width="1" height="1" fill="#40c8c8"/><rect x="13" y="18" width="1" height="1" fill="#000"/><rect x="14" y="18" width="1" height="1" fill="#40c8c8"/><rect x="15" y="18" width="1" height="1" fill="#000"/><rect x="16" y="18" width="1" height="1" fill="#40c8c8"/><rect x="17" y="18" width="1" height="1" fill="#000"/><rect x="18" y="18" width="1" height="1" fill="#40c8c8"/><rect x="19" y="18" width="1" height="1" fill="#000"/><rect x="20" y="18" width="1" height="1" fill="#40c8c8"/><rect x="21" y="18" width="1" height="1" fill="#000"/><rect x="22" y="18" width="1" height="1" fill="#40c8c8"/><rect x="23" y="18" width="1" height="1" fill="#000"/><rect x="24" y="18" width="1" height="1" fill="#40c8c8"/><rect x="25" y="18" width="1" height="1" fill="#000"/><rect x="26" y="18" width="1" height="1" fill="#40c8c8"/><rect x="27" y="18" width="1" height="1" fill="#000"/><rect x="28" y="18" width="1" height="1" fill="#40c8c8"/><rect x="29" y="18" width="1" height="1" fill="#000"/><rect x="30" y="18" width="1" height="1" fill="#40c8c8"/><rect x="31" y="18" width="1" height="1" fill="#000"/><rect x="32" y="18" width="1" height="1" fill="#40c8c8"/><rect x="33" y="18" width="1" height="1" fill="#000"/><rect x="34" y="18" width="1" height="1" fill="#40c8c8"/><rect x="35" y="18" width="1" height="1" fill="#000"/><rect x="36" y="18" width="1" height="1" fill="#40c8c8"/><rect x="37" y="18" width="1" height="1" fill="#000"/><rect x="38" y="18" width="1" height="1" fill="#40c8c8"/><rect x="39" y="18" width="1" height="1" fill="#000"/><rect x="40" y="18" width="1" height="1" fill="#40c8c8"/><rect x="41" y="18" width="1" height="1" fill="#000"/><rect x="42" y="18" width="1" height="1" fill="#40c8c8"/><rect x="43" y="18" width="1" height="1" fill="#000"/><rect x="44" y="18" width="1" height="1" fill="#40c8c8"/><rect x="45" y="18" width="1" height="1" fill="#000"/></svg>
<div style="left:31px;top:142px;width:1px;height:412px;background:#fff;"></div>
<div style="left:32px;top:141px;width:1px;height:1px;background:#fff;"></div>
<div style="left:31px;top:140px;width:1px;height:1px;background:#808080;"></div>
<div style="left:155px;top:167px;width:610px;height:1px;background:#fff;"></div>
<div style="left:765px;top:167px;width:1px;height:387px;background:#000;"></div>
<div style="left:31px;top:554px;width:735px;height:1px;background:#808080;"></div>
<div style="left:156px;top:142px;width:55px;height:1px;background:#fff;"></div>
<div style="left:211px;top:143px;width:1px;height:1px;background:#000;"></div>
<div style="left:212px;top:144px;width:1px;height:23px;background:#000;"></div>
<div class="t " style="left:161px;top:149px;color:#000;"><i style="width:3px">I</i><i style="width:7px">n</i><i style="width:6px">v</i><i style="width:7px">o</i><i style="width:3px">l</i><i style="width:6px">v</i><i style="width:7px">e</i><i style="width:7px">d</i></div>
<div style="left:33px;top:140px;width:120px;height:1px;background:#fff;"></div>
<div style="left:154px;top:141px;width:1px;height:1px;background:#000;"></div>
<div style="left:155px;top:142px;width:1px;height:25px;background:#000;"></div>
<div class="t " style="left:38px;top:147px;color:#f00;font-weight:bold;"><i style="width:8px">P</i><i style="width:5px">r</i><i style="width:7px">o</i><i style="width:7px">p</i><i style="width:7px">e</i><i style="width:5px">r</i><i style="width:4px">t</i><i style="width:7px">y</i><i style="width:3px">&nbsp;</i><i style="width:9px">&amp;</i><i style="width:3px">&nbsp;</i><i style="width:3px">I</i><i style="width:7px">g</i><i style="width:7px">n</i><i style="width:3px">i</i><i style="width:4px">t</i><i style="width:3px">i</i><i style="width:7px">o</i><i style="width:7px">n</i></div>
<div class="gb" style="left:34px;top:185px;width:442px;height:56px"></div>
<div style="left:39px;top:179px;width:52px;height:14px;background:#c0c0c0;"></div>
<div class="t " style="left:42px;top:179px;color:#000;"><i style="width:9px">N</i><i style="width:7px">u</i><i style="width:11px">m</i><i style="width:7px">b</i><i style="width:7px">e</i><i style="width:4px">r</i></div>
<div class="t " style="left:43px;top:206px;color:#000;"><i style="width:9px">R</i><i style="width:7px">e</i><i style="width:7px">s</i><i style="width:3px">i</i><i style="width:7px">d</i><i style="width:7px">e</i><i style="width:7px">n</i><i style="width:3px">t</i><i style="width:4px">i</i><i style="width:7px">a</i><i style="width:3px">l</i><i style="width:3px">&nbsp;</i><i style="width:9px">U</i><i style="width:8px">n</i><i style="width:3px">i</i><i style="width:3px">t</i><i style="width:6px">s</i></div>
<div class="sk" style="left:141px;top:202px;width:45px;height:22px;background:#fff;"></div>
<div class="t " style="left:193px;top:206px;color:#000;"><i style="width:8px">B</i><i style="width:7px">u</i><i style="width:3px">i</i><i style="width:3px">l</i><i style="width:7px">d</i><i style="width:3px">i</i><i style="width:7px">n</i><i style="width:7px">g</i><i style="width:5px">s</i><i style="width:3px">:</i><i style="width:3px">&nbsp;</i><i style="width:3px">I</i><i style="width:7px">n</i><i style="width:6px">v</i><i style="width:7px">o</i><i style="width:3px">l</i><i style="width:6px">v</i><i style="width:7px">e</i><i style="width:7px">d</i></div>
<div class="sk" style="left:298px;top:202px;width:45px;height:22px;background:#ff0;"></div>
<div class="t " style="left:354px;top:206px;color:#000;"><i style="width:7px">T</i><i style="width:7px">h</i><i style="width:4px">r</i><i style="width:7px">e</i><i style="width:7px">a</i><i style="width:3px">t</i><i style="width:7px">e</i><i style="width:7px">n</i><i style="width:7px">e</i><i style="width:7px">d</i></div>
<div class="sk" style="left:423px;top:202px;width:45px;height:22px;background:#fff;"></div>
<div class="gb" style="left:485px;top:185px;width:273px;height:56px"></div>
<div style="left:488px;top:179px;width:86px;height:14px;background:#c0c0c0;"></div>
<div class="t " style="left:491px;top:179px;color:#000;"><i style="width:8px">S</i><i style="width:3px">t</i><i style="width:4px">r</i><i style="width:7px">u</i><i style="width:6px">c</i><i style="width:3px">t</i><i style="width:7px">u</i><i style="width:4px">r</i><i style="width:7px">e</i><i style="width:3px">&nbsp;</i><i style="width:7px">T</i><i style="width:6px">y</i><i style="width:7px">p</i><i style="width:7px">e</i></div>
<div class="sk" style="left:494px;top:202px;width:252px;height:23px;background:#fff;"></div>
<div class="rz" style="left:728px;top:204px;width:16px;height:19px;background:#c0c0c0;"></div>
<div style="left:732px;top:211px;width:7px;height:1px;background:#000;"></div>
<div style="left:733px;top:212px;width:5px;height:1px;background:#000;"></div>
<div style="left:734px;top:213px;width:3px;height:1px;background:#000;"></div>
<div style="left:735px;top:214px;width:1px;height:1px;background:#000;"></div>
<div class="t " style="left:499px;top:207px;color:#000;"><i style="width:7px">1</i><i style="width:3px">&nbsp;</i><i style="width:4px">-</i><i style="width:3px">&nbsp;</i><i style="width:8px">E</i><i style="width:7px">n</i><i style="width:6px">c</i><i style="width:3px">l</i><i style="width:7px">o</i><i style="width:6px">s</i><i style="width:8px">e</i><i style="width:7px">d</i><i style="width:3px">&nbsp;</i><i style="width:7px">b</i><i style="width:7px">u</i><i style="width:3px">i</i><i style="width:3px">l</i><i style="width:7px">d</i><i style="width:3px">i</i><i style="width:7px">n</i><i style="width:7px">g</i></div>
<div class="gb" style="left:34px;top:255px;width:442px;height:128px"></div>
<div style="left:39px;top:249px;width:48px;height:14px;background:#c0c0c0;"></div>
<div class="t " style="left:42px;top:249px;color:#000;"><i style="width:3px">I</i><i style="width:7px">g</i><i style="width:7px">n</i><i style="width:4px">i</i><i style="width:3px">t</i><i style="width:3px">i</i><i style="width:7px">o</i><i style="width:7px">n</i></div>
<div class="t " style="left:43px;top:269px;color:#000;"><i style="width:9px">C</i><i style="width:7px">a</i><i style="width:8px">u</i><i style="width:6px">s</i><i style="width:7px">e</i></div>
<div class="sk" style="left:132px;top:267px;width:334px;height:23px;background:#f00;"></div>
<div class="rz" style="left:448px;top:269px;width:16px;height:19px;background:#c0c0c0;"></div>
<div style="left:452px;top:276px;width:7px;height:1px;background:#000;"></div>
<div style="left:453px;top:277px;width:5px;height:1px;background:#000;"></div>
<div style="left:454px;top:278px;width:3px;height:1px;background:#000;"></div>
<div style="left:455px;top:279px;width:1px;height:1px;background:#000;"></div>
<div class="t " style="left:43px;top:297px;color:#000;"><i style="width:8px">A</i><i style="width:4px">r</i><i style="width:7px">e</i><i style="width:7px">a</i><i style="width:3px">&nbsp;</i><i style="width:7px">o</i><i style="width:3px">f</i><i style="width:3px">&nbsp;</i><i style="width:9px">O</i><i style="width:4px">r</i><i style="width:3px">i</i><i style="width:7px">g</i><i style="width:3px">i</i><i style="width:7px">n</i></div>
<div class="sk" style="left:132px;top:296px;width:334px;height:23px;background:#f00;"></div>
<div class="rz" style="left:448px;top:298px;width:16px;height:19px;background:#c0c0c0;"></div>
<div style="left:452px;top:305px;width:7px;height:1px;background:#000;"></div>
<div style="left:453px;top:306px;width:5px;height:1px;background:#000;"></div>
<div style="left:454px;top:307px;width:3px;height:1px;background:#000;"></div>
<div style="left:455px;top:308px;width:1px;height:1px;background:#000;"></div>
<div class="t " style="left:43px;top:327px;color:#000;"><i style="width:9px">H</i><i style="width:7px">e</i><i style="width:7px">a</i><i style="width:3px">t</i><i style="width:4px">&nbsp;</i><i style="width:8px">S</i><i style="width:7px">o</i><i style="width:7px">u</i><i style="width:4px">r</i><i style="width:6px">c</i><i style="width:7px">e</i></div>
<div class="sk" style="left:132px;top:326px;width:334px;height:23px;background:#f00;"></div>
<div class="rz" style="left:448px;top:328px;width:16px;height:19px;background:#c0c0c0;"></div>
<div style="left:452px;top:335px;width:7px;height:1px;background:#000;"></div>
<div style="left:453px;top:336px;width:5px;height:1px;background:#000;"></div>
<div style="left:454px;top:337px;width:3px;height:1px;background:#000;"></div>
<div style="left:455px;top:338px;width:1px;height:1px;background:#000;"></div>
<div class="sk" style="left:214px;top:358px;width:13px;height:13px;background:#fff;"></div>
<div class="t " style="left:230px;top:358px;color:#000;"><i style="width:7px">F</i><i style="width:3px">i</i><i style="width:4px">r</i><i style="width:7px">e</i><i style="width:3px">&nbsp;</i><i style="width:9px">C</i><i style="width:7px">o</i><i style="width:7px">n</i><i style="width:3px">f</i><i style="width:3px">i</i><i style="width:7px">n</i><i style="width:7px">e</i><i style="width:7px">d</i><i style="width:3px">&nbsp;</i><i style="width:3px">t</i><i style="width:8px">o</i><i style="width:3px">&nbsp;</i><i style="width:9px">O</i><i style="width:7px">b</i><i style="width:3px">j</i><i style="width:7px">e</i><i style="width:6px">c</i><i style="width:3px">t</i><i style="width:3px">&nbsp;</i><i style="width:7px">o</i><i style="width:3px">f</i><i style="width:3px">&nbsp;</i><i style="width:9px">O</i><i style="width:4px">r</i><i style="width:3px">i</i><i style="width:7px">g</i><i style="width:3px">i</i><i style="width:7px">n</i></div>
<div class="gb" style="left:34px;top:392px;width:442px;height:72px"></div>
<div style="left:39px;top:386px;width:71px;height:14px;background:#c0c0c0;"></div>
<div class="t " style="left:42px;top:386px;color:#000;"><i style="width:7px">F</i><i style="width:3px">i</i><i style="width:4px">r</i><i style="width:6px">s</i><i style="width:3px">t</i><i style="width:3px">&nbsp;</i><i style="width:4px">I</i><i style="width:7px">g</i><i style="width:7px">n</i><i style="width:3px">i</i><i style="width:3px">t</i><i style="width:7px">e</i><i style="width:7px">d</i></div>
<div class="t " style="left:43px;top:404px;color:#000;"><i style="width:3px">I</i><i style="width:4px">t</i><i style="width:7px">e</i><i style="width:10px">m</i></div>
<div class="sk" style="left:132px;top:402px;width:334px;height:23px;background:#f00;"></div>
<div class="rz" style="left:448px;top:404px;width:16px;height:19px;background:#c0c0c0;"></div>
<div style="left:452px;top:411px;width:7px;height:1px;background:#000;"></div>
<div style="left:453px;top:412px;width:5px;height:1px;background:#000;"></div>
<div style="left:454px;top:413px;width:3px;height:1px;background:#000;"></div>
<div style="left:455px;top:414px;width:1px;height:1px;background:#000;"></div>
<div class="t " style="left:43px;top:439px;color:#000;"><i style="width:7px">T</i><i style="width:6px">y</i><i style="width:7px">p</i><i style="width:6px">e</i><i style="width:3px">&nbsp;</i><i style="width:7px">o</i><i style="width:3px">f</i><i style="width:3px">&nbsp;</i><i style="width:10px">M</i><i style="width:7px">a</i><i style="width:3px">t</i><i style="width:6px">e</i><i style="width:4px">r</i><i style="width:3px">i</i><i style="width:7px">a</i><i style="width:3px">l</i></div>
<div class="sk" style="left:132px;top:434px;width:334px;height:23px;background:#f00;"></div>
<div class="rz" style="left:448px;top:436px;width:16px;height:19px;background:#c0c0c0;"></div>
<div style="left:452px;top:443px;width:7px;height:1px;background:#000;"></div>
<div style="left:453px;top:444px;width:5px;height:1px;background:#000;"></div>
<div style="left:454px;top:445px;width:3px;height:1px;background:#000;"></div>
<div style="left:455px;top:446px;width:1px;height:1px;background:#000;"></div>
<div class="gb" style="left:34px;top:474px;width:442px;height:72px"></div>
<div style="left:39px;top:468px;width:175px;height:14px;background:#c0c0c0;"></div>
<div class="t " style="left:42px;top:468px;color:#000;"><i style="width:7px">F</i><i style="width:7px">a</i><i style="width:6px">c</i><i style="width:3px">t</i><i style="width:7px">o</i><i style="width:4px">r</i><i style="width:6px">s</i><i style="width:4px">&nbsp;</i><i style="width:9px">C</i><i style="width:7px">o</i><i style="width:7px">n</i><i style="width:3px">t</i><i style="width:4px">r</i><i style="width:3px">i</i><i style="width:7px">b</i><i style="width:7px">u</i><i style="width:3px">t</i><i style="width:3px">i</i><i style="width:7px">n</i><i style="width:7px">g</i><i style="width:3px">&nbsp;</i><i style="width:3px">t</i><i style="width:7px">o</i><i style="width:4px">&nbsp;</i><i style="width:3px">I</i><i style="width:7px">g</i><i style="width:7px">n</i><i style="width:3px">i</i><i style="width:3px">t</i><i style="width:3px">i</i><i style="width:7px">o</i><i style="width:7px">n</i></div>
<div class="sk" style="left:43px;top:492px;width:13px;height:13px;background:#fff;"></div>
<div class="t " style="left:59px;top:492px;color:#000;"><i style="width:9px">N</i><i style="width:7px">o</i><i style="width:7px">n</i><i style="width:7px">e</i></div>
<div class="sk" style="left:132px;top:485px;width:334px;height:23px;background:#f00;"></div>
<div class="rz" style="left:448px;top:487px;width:16px;height:19px;background:#c0c0c0;"></div>
<div style="left:452px;top:494px;width:7px;height:1px;background:#000;"></div>
<div style="left:453px;top:495px;width:5px;height:1px;background:#000;"></div>
<div style="left:454px;top:496px;width:3px;height:1px;background:#000;"></div>
<div style="left:455px;top:497px;width:1px;height:1px;background:#000;"></div>
<div class="sk" style="left:132px;top:516px;width:334px;height:23px;background:#c0c0c0;"></div>
<div class="rz" style="left:448px;top:518px;width:16px;height:19px;background:#c0c0c0;"></div>
<div style="left:452px;top:525px;width:7px;height:1px;background:#808080;"></div>
<div style="left:453px;top:526px;width:5px;height:1px;background:#808080;"></div>
<div style="left:454px;top:527px;width:3px;height:1px;background:#808080;"></div>
<div style="left:455px;top:528px;width:1px;height:1px;background:#808080;"></div>
<div style="left:456px;top:528px;width:1px;height:1px;background:#fff;"></div>
<div style="left:457px;top:527px;width:1px;height:1px;background:#fff;"></div>
<div style="left:455px;top:529px;width:1px;height:1px;background:#fff;"></div>
<div class="gb" style="left:485px;top:255px;width:272px;height:291px"></div>
<div style="left:490px;top:249px;width:168px;height:14px;background:#c0c0c0;"></div>
<div class="t " style="left:493px;top:249px;color:#000;"><i style="width:9px">O</i><i style="width:7px">n</i><i style="width:4px">-</i><i style="width:8px">S</i><i style="width:3px">i</i><i style="width:3px">t</i><i style="width:8px">e</i><i style="width:3px">&nbsp;</i><i style="width:10px">M</i><i style="width:7px">a</i><i style="width:3px">t</i><i style="width:7px">e</i><i style="width:4px">r</i><i style="width:3px">i</i><i style="width:7px">a</i><i style="width:3px">l</i><i style="width:6px">s</i><i style="width:3px">&nbsp;</i><i style="width:7px">o</i><i style="width:4px">r</i><i style="width:3px">&nbsp;</i><i style="width:9px">P</i><i style="width:4px">r</i><i style="width:7px">o</i><i style="width:7px">d</i><i style="width:7px">u</i><i style="width:6px">c</i><i style="width:3px">t</i><i style="width:6px">s</i></div>
<div class="sk" style="left:637px;top:270px;width:13px;height:13px;background:#fff;"></div>
<svg style="left:640px;top:273px" width="7" height="7" shape-rendering="crispEdges"><rect x="6" y="0" width="1" height="1" fill="#000"/><rect x="5" y="1" width="2" height="1" fill="#000"/><rect x="0" y="2" width="1" height="1" fill="#000"/><rect x="4" y="2" width="3" height="1" fill="#000"/><rect x="0" y="3" width="2" height="1" fill="#000"/><rect x="3" y="3" width="3" height="1" fill="#000"/><rect x="0" y="4" width="5" height="1" fill="#000"/><rect x="1" y="5" width="3" height="1" fill="#000"/><rect x="2" y="6" width="1" height="1" fill="#000"/></svg>
<div class="t " style="left:653px;top:270px;color:#000;"><i style="width:9px">N</i><i style="width:7px">o</i><i style="width:7px">n</i><i style="width:7px">e</i></div>
<div class="sk" style="left:495px;top:294px;width:251px;height:23px;background:#c0c0c0;"></div>
<div class="rz" style="left:728px;top:296px;width:16px;height:19px;background:#c0c0c0;"></div>
<div style="left:732px;top:303px;width:7px;height:1px;background:#808080;"></div>
<div style="left:733px;top:304px;width:5px;height:1px;background:#808080;"></div>
<div style="left:734px;top:305px;width:3px;height:1px;background:#808080;"></div>
<div style="left:735px;top:306px;width:1px;height:1px;background:#808080;"></div>
<div style="left:736px;top:306px;width:1px;height:1px;background:#fff;"></div>
<div style="left:737px;top:305px;width:1px;height:1px;background:#fff;"></div>
<div style="left:735px;top:307px;width:1px;height:1px;background:#fff;"></div>
<div class="sk" style="left:495px;top:325px;width:13px;height:13px;background:#c0c0c0;"></div>
<div class="t ds" style="left:511px;top:325px;"><i style="width:8px">S</i><i style="width:3px">t</i><i style="width:7px">o</i><i style="width:4px">r</i><i style="width:8px">a</i><i style="width:7px">g</i><i style="width:7px">e</i><i style="width:3px">/</i><i style="width:9px">w</i><i style="width:7px">a</i><i style="width:4px">r</i><i style="width:7px">e</i><i style="width:7px">h</i><i style="width:8px">o</i><i style="width:7px">u</i><i style="width:6px">s</i><i style="width:3px">i</i><i style="width:7px">n</i><i style="width:7px">g</i></div>
<div class="sk" style="left:638px;top:325px;width:13px;height:13px;background:#c0c0c0;"></div>
<div class="t ds" style="left:654px;top:325px;"><i style="width:8px">P</i><i style="width:4px">r</i><i style="width:7px">o</i><i style="width:7px">c</i><i style="width:3px">.</i><i style="width:3px">/</i><i style="width:10px">m</i><i style="width:7px">a</i><i style="width:7px">n</i><i style="width:7px">u</i><i style="width:4px">f</i><i style="width:7px">a</i><i style="width:6px">c</i><i style="width:3px">t</i><i style="width:3px">.</i></div>
<div class="sk" style="left:495px;top:345px;width:13px;height:13px;background:#c0c0c0;"></div>
<div class="t ds" style="left:511px;top:345px;"><i style="width:9px">R</i><i style="width:7px">e</i><i style="width:7px">p</i><i style="width:7px">a</i><i style="width:3px">i</i><i style="width:4px">r</i><i style="width:3px">&nbsp;</i><i style="width:7px">o</i><i style="width:4px">r</i><i style="width:3px">&nbsp;</i><i style="width:8px">S</i><i style="width:7px">e</i><i style="width:4px">r</i><i style="width:6px">v</i><i style="width:3px">i</i><i style="width:6px">c</i><i style="width:7px">e</i></div>
<div class="sk" style="left:638px;top:345px;width:13px;height:13px;background:#c0c0c0;"></div>
<div class="t ds" style="left:654px;top:345px;"><i style="width:8px">P</i><i style="width:7px">a</i><i style="width:6px">c</i><i style="width:7px">k</i><i style="width:7px">a</i><i style="width:7px">g</i><i style="width:7px">e</i><i style="width:7px">d</i><i style="width:3px">&nbsp;</i><i style="width:10px">G</i><i style="width:7px">o</i><i style="width:7px">o</i><i style="width:7px">d</i><i style="width:6px">s</i></div>
<div class="sk" style="left:495px;top:378px;width:251px;height:23px;background:#c0c0c0;"></div>
<div class="rz" style="left:728px;top:380px;width:16px;height:19px;background:#c0c0c0;"></div>
<div style="left:732px;top:387px;width:7px;height:1px;background:#808080;"></div>
<div style="left:733px;top:388px;width:5px;height:1px;background:#808080;"></div>
<div style="left:734px;top:389px;width:3px;height:1px;background:#808080;"></div>
<div style="left:735px;top:390px;width:1px;height:1px;background:#808080;"></div>
<div style="left:736px;top:390px;width:1px;height:1px;background:#fff;"></div>
<div style="left:737px;top:389px;width:1px;height:1px;background:#fff;"></div>
<div style="left:735px;top:391px;width:1px;height:1px;background:#fff;"></div>
<div class="sk" style="left:495px;top:409px;width:13px;height:13px;background:#c0c0c0;"></div>
<div class="t ds" style="left:511px;top:409px;"><i style="width:8px">S</i><i style="width:3px">t</i><i style="width:7px">o</i><i style="width:4px">r</i><i style="width:8px">a</i><i style="width:7px">g</i><i style="width:7px">e</i><i style="width:3px">/</i><i style="width:9px">w</i><i style="width:7px">a</i><i style="width:4px">r</i><i style="width:7px">e</i><i style="width:7px">h</i><i style="width:8px">o</i><i style="width:7px">u</i><i style="width:6px">s</i><i style="width:3px">i</i><i style="width:7px">n</i><i style="width:7px">g</i></div>
<div class="sk" style="left:638px;top:409px;width:13px;height:13px;background:#c0c0c0;"></div>
<div class="t ds" style="left:654px;top:409px;"><i style="width:8px">P</i><i style="width:4px">r</i><i style="width:7px">o</i><i style="width:7px">c</i><i style="width:3px">.</i><i style="width:3px">/</i><i style="width:10px">m</i><i style="width:7px">a</i><i style="width:7px">n</i><i style="width:7px">u</i><i style="width:4px">f</i><i style="width:7px">a</i><i style="width:6px">c</i><i style="width:3px">t</i><i style="width:3px">.</i></div>
<div class="sk" style="left:495px;top:429px;width:13px;height:13px;background:#c0c0c0;"></div>
<div class="t ds" style="left:511px;top:429px;"><i style="width:9px">R</i><i style="width:7px">e</i><i style="width:7px">p</i><i style="width:7px">a</i><i style="width:3px">i</i><i style="width:4px">r</i><i style="width:3px">&nbsp;</i><i style="width:7px">o</i><i style="width:4px">r</i><i style="width:3px">&nbsp;</i><i style="width:8px">S</i><i style="width:7px">e</i><i style="width:4px">r</i><i style="width:6px">v</i><i style="width:3px">i</i><i style="width:6px">c</i><i style="width:7px">e</i></div>
<div class="sk" style="left:638px;top:429px;width:13px;height:13px;background:#c0c0c0;"></div>
<div class="t ds" style="left:654px;top:429px;"><i style="width:8px">P</i><i style="width:7px">a</i><i style="width:6px">c</i><i style="width:7px">k</i><i style="width:7px">a</i><i style="width:7px">g</i><i style="width:7px">e</i><i style="width:7px">d</i><i style="width:3px">&nbsp;</i><i style="width:10px">G</i><i style="width:7px">o</i><i style="width:7px">o</i><i style="width:7px">d</i><i style="width:6px">s</i></div>
<div class="sk" style="left:495px;top:463px;width:251px;height:23px;background:#c0c0c0;"></div>
<div class="rz" style="left:728px;top:465px;width:16px;height:19px;background:#c0c0c0;"></div>
<div style="left:732px;top:472px;width:7px;height:1px;background:#808080;"></div>
<div style="left:733px;top:473px;width:5px;height:1px;background:#808080;"></div>
<div style="left:734px;top:474px;width:3px;height:1px;background:#808080;"></div>
<div style="left:735px;top:475px;width:1px;height:1px;background:#808080;"></div>
<div style="left:736px;top:475px;width:1px;height:1px;background:#fff;"></div>
<div style="left:737px;top:474px;width:1px;height:1px;background:#fff;"></div>
<div style="left:735px;top:476px;width:1px;height:1px;background:#fff;"></div>
<div class="sk" style="left:495px;top:494px;width:13px;height:13px;background:#c0c0c0;"></div>
<div class="t ds" style="left:511px;top:494px;"><i style="width:8px">S</i><i style="width:3px">t</i><i style="width:7px">o</i><i style="width:4px">r</i><i style="width:8px">a</i><i style="width:7px">g</i><i style="width:7px">e</i><i style="width:3px">/</i><i style="width:9px">w</i><i style="width:7px">a</i><i style="width:4px">r</i><i style="width:7px">e</i><i style="width:7px">h</i><i style="width:8px">o</i><i style="width:7px">u</i><i style="width:6px">s</i><i style="width:3px">i</i><i style="width:7px">n</i><i style="width:7px">g</i></div>
<div class="sk" style="left:638px;top:494px;width:13px;height:13px;background:#c0c0c0;"></div>
<div class="t ds" style="left:654px;top:494px;"><i style="width:8px">P</i><i style="width:4px">r</i><i style="width:7px">o</i><i style="width:7px">c</i><i style="width:3px">.</i><i style="width:3px">/</i><i style="width:10px">m</i><i style="width:7px">a</i><i style="width:7px">n</i><i style="width:7px">u</i><i style="width:4px">f</i><i style="width:7px">a</i><i style="width:6px">c</i><i style="width:3px">t</i><i style="width:3px">.</i></div>
<div class="sk" style="left:495px;top:514px;width:13px;height:13px;background:#c0c0c0;"></div>
<div class="t ds" style="left:511px;top:514px;"><i style="width:9px">R</i><i style="width:7px">e</i><i style="width:7px">p</i><i style="width:7px">a</i><i style="width:3px">i</i><i style="width:4px">r</i><i style="width:3px">&nbsp;</i><i style="width:7px">o</i><i style="width:4px">r</i><i style="width:3px">&nbsp;</i><i style="width:8px">S</i><i style="width:7px">e</i><i style="width:4px">r</i><i style="width:6px">v</i><i style="width:3px">i</i><i style="width:6px">c</i><i style="width:7px">e</i></div>
<div class="sk" style="left:638px;top:514px;width:13px;height:13px;background:#c0c0c0;"></div>
<div class="t ds" style="left:654px;top:514px;"><i style="width:8px">P</i><i style="width:7px">a</i><i style="width:6px">c</i><i style="width:7px">k</i><i style="width:7px">a</i><i style="width:7px">g</i><i style="width:7px">e</i><i style="width:7px">d</i><i style="width:3px">&nbsp;</i><i style="width:10px">G</i><i style="width:7px">o</i><i style="width:7px">o</i><i style="width:7px">d</i><i style="width:6px">s</i></div>
<div style="left:0px;top:572px;width:800px;height:28px;background:#c0c0c0;"></div>
<div style="left:0px;top:573px;width:800px;height:1px;background:#fff;"></div>
<div class="rz" style="left:2px;top:576px;width:54px;height:22px;background:#c0c0c0;"></div>
<svg style="left:4px;top:580px" width="19" height="15" shape-rendering="crispEdges"><rect x="11" y="0" width="4" height="1" fill="#000"/><rect x="9" y="1" width="8" height="1" fill="#000"/><rect x="2" y="2" width="1" height="1" fill="#000"/><rect x="8" y="2" width="2" height="1" fill="#000"/><rect x="10" y="2" width="2" height="1" fill="#f00"/><rect x="12" y="2" width="2" height="1" fill="#000"/><rect x="14" y="2" width="2" height="1" fill="#0f0"/><rect x="16" y="2" width="2" height="1" fill="#000"/><rect x="2" y="3" width="1" height="1" fill="#000"/><rect x="4" y="3" width="2" height="1" fill="#000"/><rect x="8" y="3" width="1" height="1" fill="#000"/><rect x="9" y="3" width="2" height="1" fill="#f00"/><rect x="11" y="3" width="3" height="1" fill="#000"/><rect x="14" y="3" width="2" height="1" fill="#0f0"/><rect x="16" y="3" width="2" height="1" fill="#000"/><rect x="4" y="4" width="5" height="1" fill="#000"/><rect x="9" y="4" width="2" height="1" fill="#f00"/><rect x="11" y="4" width="4" height="1" fill="#000"/><rect x="15" y="4" width="2" height="1" fill="#0f0"/><rect x="17" y="4" width="1" height="1" fill="#000"/><rect x="2" y="5" width="1" height="1" fill="#f00"/><rect x="8" y="5" width="1" height="1" fill="#000"/><rect x="9" y="5" width="2" height="1" fill="#f00"/><rect x="11" y="5" width="3" height="1" fill="#000"/><rect x="14" y="5" width="2" height="1" fill="#0f0"/><rect x="16" y="5" width="2" height="1" fill="#000"/><rect x="2" y="6" width="1" height="1" fill="#f00"/><rect x="4" y="6" width="4" height="1" fill="#f00"/><rect x="8" y="6" width="10" height="1" fill="#000"/><rect x="4" y="7" width="4" height="1" fill="#f00"/><rect x="8" y="7" width="2" height="1" fill="#000"/><rect x="10" y="7" width="2" height="1" fill="#00f"/><rect x="12" y="7" width="2" height="1" fill="#000"/><rect x="14" y="7" width="2" height="1" fill="#ff0"/><rect x="16" y="7" width="2" height="1" fill="#000"/><rect x="2" y="8" width="1" height="1" fill="#00f"/><rect x="8" y="8" width="1" height="1" fill="#000"/><rect x="9" y="8" width="2" height="1" fill="#00f"/><rect x="11" y="8" width="3" height="1" fill="#000"/><rect x="14" y="8" width="2" height="1" fill="#ff0"/><rect x="16" y="8" width="2" height="1" fill="#000"/><rect x="2" y="9" width="1" height="1" fill="#00f"/><rect x="4" y="9" width="4" height="1" fill="#00f"/><rect x="8" y="9" width="1" height="1" fill="#000"/><rect x="9" y="9" width="2" height="1" fill="#00f"/><rect x="11" y="9" width="4" height="1" fill="#000"/><rect x="15" y="9" width="2" height="1" fill="#ff0"/><rect x="17" y="9" width="1" height="1" fill="#000"/><rect x="4" y="10" width="4" height="1" fill="#00f"/><rect x="8" y="10" width="1" height="1" fill="#000"/><rect x="9" y="10" width="2" height="1" fill="#00f"/><rect x="11" y="10" width="3" height="1" fill="#000"/><rect x="14" y="10" width="2" height="1" fill="#ff0"/><rect x="16" y="10" width="2" height="1" fill="#000"/><rect x="2" y="11" width="1" height="1" fill="#000"/><rect x="8" y="11" width="10" height="1" fill="#000"/><rect x="2" y="12" width="1" height="1" fill="#000"/><rect x="4" y="12" width="14" height="1" fill="#000"/><rect x="4" y="13" width="7" height="1" fill="#000"/><rect x="14" y="13" width="4" height="1" fill="#000"/><rect x="17" y="14" width="1" height="1" fill="#000"/></svg>
<div class="t " style="left:24px;top:580px;color:#000;font-weight:bold;"><i style="width:8px">S</i><i style="width:4px">t</i><i style="width:7px">a</i><i style="width:5px">r</i><i style="width:4px">t</i></div>
<div class="rz" style="left:60px;top:576px;width:143px;height:22px;background:#c0c0c0;"></div>
<div class="t " style="left:82px;top:580px;color:#000;font-size:11px;filter:url(#th2);"><i style="width:3px">I</i><i style="width:6px">n</i><i style="width:5px">b</i><i style="width:6px">o</i><i style="width:6px">x</i><i style="width:3px">&nbsp;</i><i style="width:4px">-</i><i style="width:2px">&nbsp;</i><i style="width:9px">M</i><i style="width:2px">i</i><i style="width:6px">c</i><i style="width:4px">r</i><i style="width:5px">o</i><i style="width:6px">s</i><i style="width:6px">o</i><i style="width:3px">f</i><i style="width:3px">t</i><i style="width:2px">&nbsp;</i><i style="width:9px">O</i><i style="width:6px">u</i><i style="width:3px">t</i><i style="width:2px">l</i><i style="width:5px">o</i><i style="width:6px">o</i><i style="width:6px">k</i></div>
<div class="rz" style="left:206px;top:576px;width:143px;height:22px;background:#c0c0c0;"></div>
<div class="t " style="left:228px;top:580px;color:#000;font-size:11px;filter:url(#th2);"><i style="width:7px">F</i><i style="width:2px">i</i><i style="width:3px">r</i><i style="width:6px">e</i><i style="width:8px">R</i><i style="width:9px">M</i><i style="width:7px">S</i><i style="width:3px">&nbsp;</i><i style="width:6px">5</i><i style="width:2px">.</i><i style="width:6px">0</i><i style="width:3px">&nbsp;</i><i style="width:3px">f</i><i style="width:6px">o</i><i style="width:3px">r</i><i style="width:3px">&nbsp;</i><i style="width:8px">H</i><i style="width:6px">o</i><i style="width:6px">n</i><i style="width:6px">o</i><i style="width:1px">l</i><i style="width:3px">.</i><i style="width:3px">.</i><i style="width:3px">.</i></div>
<div class="rz" style="left:352px;top:576px;width:143px;height:22px;background:#c0c0c0;"></div>
<div class="t " style="left:374px;top:580px;color:#000;font-size:11px;filter:url(#th2);"><i style="width:8px">N</i><i style="width:7px">F</i><i style="width:2px">I</i><i style="width:8px">R</i><i style="width:7px">S</i><i style="width:3px">&nbsp;</i><i style="width:6px">5</i><i style="width:2px">&nbsp;</i><i style="width:9px">G</i><i style="width:6px">u</i><i style="width:2px">i</i><i style="width:5px">d</i><i style="width:6px">e</i><i style="width:3px">&nbsp;</i><i style="width:4px">-</i><i style="width:3px">&nbsp;</i><i style="width:8px">M</i><i style="width:2px">i</i><i style="width:6px">c</i><i style="width:4px">r</i><i style="width:6px">o</i><i style="width:2px">.</i><i style="width:3px">.</i><i style="width:3px">.</i></div>
<svg style="left:64px;top:579px" width="16" height="16" shape-rendering="crispEdges"><rect x="0" y="0" width="16" height="1" fill="#808000"/><rect x="0" y="1" width="16" height="1" fill="#808000"/><rect x="0" y="2" width="2" height="1" fill="#808000"/><rect x="2" y="2" width="4" height="1" fill="#fff"/><rect x="6" y="2" width="5" height="1" fill="#808000"/><rect x="11" y="2" width="3" height="1" fill="#fff"/><rect x="14" y="2" width="2" height="1" fill="#808000"/><rect x="0" y="3" width="2" height="1" fill="#808000"/><rect x="2" y="3" width="3" height="1" fill="#fff"/><rect x="5" y="3" width="7" height="1" fill="#808000"/><rect x="12" y="3" width="2" height="1" fill="#fff"/><rect x="14" y="3" width="2" height="1" fill="#808000"/><rect x="0" y="4" width="2" height="1" fill="#808000"/><rect x="2" y="4" width="2" height="1" fill="#fff"/><rect x="4" y="4" width="2" height="1" fill="#808000"/><rect x="6" y="4" width="5" height="1" fill="#fff"/><rect x="11" y="4" width="2" height="1" fill="#808000"/><rect x="13" y="4" width="1" height="1" fill="#fff"/><rect x="14" y="4" width="2" height="1" fill="#808000"/><rect x="0" y="5" width="2" height="1" fill="#808000"/><rect x="2" y="5" width="1" height="1" fill="#fff"/><rect x="3" y="5" width="2" height="1" fill="#808000"/><rect x="5" y="5" width="2" height="1" fill="#fff"/><rect x="7" y="5" width="2" height="1" fill="#808000"/><rect x="9" y="5" width="3" height="1" fill="#fff"/><rect x="12" y="5" width="4" height="1" fill="#808000"/><rect x="0" y="6" width="4" height="1" fill="#808000"/><rect x="4" y="6" width="3" height="1" fill="#fff"/><rect x="7" y="6" width="2" height="1" fill="#808000"/><rect x="9" y="6" width="4" height="1" fill="#fff"/><rect x="13" y="6" width="3" height="1" fill="#808000"/><rect x="0" y="7" width="4" height="1" fill="#808000"/><rect x="4" y="7" width="3" height="1" fill="#fff"/><rect x="7" y="7" width="2" height="1" fill="#808000"/><rect x="9" y="7" width="4" height="1" fill="#fff"/><rect x="13" y="7" width="3" height="1" fill="#808000"/><rect x="0" y="8" width="4" height="1" fill="#808000"/><rect x="4" y="8" width="3" height="1" fill="#fff"/><rect x="7" y="8" width="2" height="1" fill="#808000"/><rect x="9" y="8" width="4" height="1" fill="#fff"/><rect x="13" y="8" width="3" height="1" fill="#808000"/><rect x="0" y="9" width="4" height="1" fill="#808000"/><rect x="4" y="9" width="3" height="1" fill="#fff"/><rect x="7" y="9" width="5" height="1" fill="#808000"/><rect x="12" y="9" width="1" height="1" fill="#fff"/><rect x="13" y="9" width="3" height="1" fill="#808000"/><rect x="0" y="10" width="4" height="1" fill="#808000"/><rect x="4" y="10" width="9" height="1" fill="#fff"/><rect x="13" y="10" width="3" height="1" fill="#808000"/><rect x="0" y="11" width="2" height="1" fill="#808000"/><rect x="2" y="11" width="1" height="1" fill="#fff"/><rect x="3" y="11" width="2" height="1" fill="#808000"/><rect x="5" y="11" width="7" height="1" fill="#fff"/><rect x="12" y="11" width="2" height="1" fill="#808000"/><rect x="14" y="11" width="1" height="1" fill="#fff"/><rect x="15" y="11" width="1" height="1" fill="#808000"/><rect x="0" y="12" width="2" height="1" fill="#808000"/><rect x="2" y="12" width="2" height="1" fill="#fff"/><rect x="4" y="12" width="2" height="1" fill="#808000"/><rect x="6" y="12" width="5" height="1" fill="#fff"/><rect x="11" y="12" width="2" height="1" fill="#808000"/><rect x="13" y="12" width="2" height="1" fill="#fff"/><rect x="15" y="12" width="1" height="1" fill="#808000"/><rect x="0" y="13" width="2" height="1" fill="#808000"/><rect x="2" y="13" width="3" height="1" fill="#fff"/><rect x="5" y="13" width="7" height="1" fill="#808000"/><rect x="12" y="13" width="3" height="1" fill="#fff"/><rect x="15" y="13" width="1" height="1" fill="#808000"/><rect x="0" y="14" width="16" height="1" fill="#808000"/><rect x="0" y="15" width="16" height="1" fill="#808000"/></svg>
<svg style="left:210px;top:579px" width="16" height="16" shape-rendering="crispEdges"><rect x="0" y="0" width="16" height="1" fill="#fff"/><rect x="0" y="1" width="9" height="1" fill="#fff"/><rect x="9" y="1" width="6" height="1" fill="#000080"/><rect x="15" y="1" width="1" height="1" fill="#fff"/><rect x="0" y="2" width="5" height="1" fill="#fff"/><rect x="5" y="2" width="10" height="1" fill="#000080"/><rect x="15" y="2" width="1" height="1" fill="#fff"/><rect x="0" y="3" width="3" height="1" fill="#fff"/><rect x="3" y="3" width="12" height="1" fill="#000080"/><rect x="15" y="3" width="1" height="1" fill="#fff"/><rect x="0" y="4" width="3" height="1" fill="#fff"/><rect x="3" y="4" width="3" height="1" fill="#000080"/><rect x="6" y="4" width="10" height="1" fill="#fff"/><rect x="0" y="5" width="3" height="1" fill="#fff"/><rect x="3" y="5" width="2" height="1" fill="#000080"/><rect x="5" y="5" width="11" height="1" fill="#fff"/><rect x="0" y="6" width="3" height="1" fill="#fff"/><rect x="3" y="6" width="7" height="1" fill="#000080"/><rect x="10" y="6" width="6" height="1" fill="#fff"/><rect x="0" y="7" width="5" height="1" fill="#fff"/><rect x="5" y="7" width="6" height="1" fill="#000080"/><rect x="11" y="7" width="5" height="1" fill="#fff"/><rect x="0" y="8" width="9" height="1" fill="#fff"/><rect x="9" y="8" width="4" height="1" fill="#000080"/><rect x="13" y="8" width="3" height="1" fill="#fff"/><rect x="0" y="9" width="10" height="1" fill="#fff"/><rect x="10" y="9" width="3" height="1" fill="#000080"/><rect x="13" y="9" width="3" height="1" fill="#fff"/><rect x="0" y="10" width="1" height="1" fill="#fff"/><rect x="1" y="10" width="1" height="1" fill="#000080"/><rect x="2" y="10" width="7" height="1" fill="#fff"/><rect x="9" y="10" width="4" height="1" fill="#000080"/><rect x="13" y="10" width="3" height="1" fill="#fff"/><rect x="0" y="11" width="12" height="1" fill="#000080"/><rect x="12" y="11" width="4" height="1" fill="#fff"/><rect x="0" y="12" width="10" height="1" fill="#000080"/><rect x="10" y="12" width="6" height="1" fill="#fff"/><rect x="0" y="13" width="16" height="1" fill="#fff"/><rect x="0" y="14" width="16" height="1" fill="#fff"/><rect x="0" y="15" width="16" height="1" fill="#fff"/></svg>
<svg style="left:356px;top:580px" width="17" height="15" shape-rendering="crispEdges"><rect x="3" y="0" width="10" height="1" fill="#808080"/><rect x="3" y="1" width="1" height="1" fill="#808080"/><rect x="4" y="1" width="8" height="1" fill="#fff"/><rect x="12" y="1" width="1" height="1" fill="#000"/><rect x="13" y="1" width="1" height="1" fill="#fff"/><rect x="0" y="2" width="1" height="1" fill="#000"/><rect x="1" y="2" width="1" height="1" fill="#00f"/><rect x="2" y="2" width="1" height="1" fill="#000"/><rect x="3" y="2" width="1" height="1" fill="#00f"/><rect x="4" y="2" width="1" height="1" fill="#000"/><rect x="5" y="2" width="1" height="1" fill="#00f"/><rect x="6" y="2" width="1" height="1" fill="#000"/><rect x="7" y="2" width="1" height="1" fill="#00f"/><rect x="8" y="2" width="1" height="1" fill="#000"/><rect x="9" y="2" width="1" height="1" fill="#00f"/><rect x="10" y="2" width="1" height="1" fill="#000"/><rect x="11" y="2" width="1" height="1" fill="#fff"/><rect x="12" y="2" width="1" height="1" fill="#000"/><rect x="13" y="2" width="1" height="1" fill="#fff"/><rect x="14" y="2" width="1" height="1" fill="#000"/><rect x="0" y="3" width="1" height="1" fill="#00f"/><rect x="1" y="3" width="9" height="1" fill="#fff"/><rect x="10" y="3" width="1" height="1" fill="#00f"/><rect x="11" y="3" width="4" height="1" fill="#fff"/><rect x="15" y="3" width="1" height="1" fill="#000"/><rect x="0" y="4" width="1" height="1" fill="#000"/><rect x="1" y="4" width="1" height="1" fill="#fff"/><rect x="2" y="4" width="1" height="1" fill="#000"/><rect x="3" y="4" width="5" height="1" fill="#fff"/><rect x="8" y="4" width="1" height="1" fill="#000"/><rect x="9" y="4" width="1" height="1" fill="#fff"/><rect x="10" y="4" width="1" height="1" fill="#000"/><rect x="11" y="4" width="4" height="1" fill="#fff"/><rect x="15" y="4" width="1" height="1" fill="#000"/><rect x="0" y="5" width="1" height="1" fill="#00f"/><rect x="1" y="5" width="1" height="1" fill="#fff"/><rect x="2" y="5" width="1" height="1" fill="#000"/><rect x="3" y="5" width="1" height="1" fill="#fff"/><rect x="4" y="5" width="1" height="1" fill="#000"/><rect x="5" y="5" width="1" height="1" fill="#fff"/><rect x="6" y="5" width="1" height="1" fill="#000"/><rect x="7" y="5" width="1" height="1" fill="#fff"/><rect x="8" y="5" width="1" height="1" fill="#000"/><rect x="9" y="5" width="1" height="1" fill="#fff"/><rect x="10" y="5" width="1" height="1" fill="#00f"/><rect x="11" y="5" width="1" height="1" fill="#fff"/><rect x="12" y="5" width="1" height="1" fill="#808080"/><rect x="13" y="5" width="2" height="1" fill="#fff"/><rect x="15" y="5" width="1" height="1" fill="#000"/><rect x="0" y="6" width="1" height="1" fill="#000"/><rect x="1" y="6" width="1" height="1" fill="#fff"/><rect x="2" y="6" width="1" height="1" fill="#000"/><rect x="3" y="6" width="1" height="1" fill="#fff"/><rect x="4" y="6" width="1" height="1" fill="#000"/><rect x="5" y="6" width="1" height="1" fill="#fff"/><rect x="6" y="6" width="1" height="1" fill="#000"/><rect x="7" y="6" width="1" height="1" fill="#fff"/><rect x="8" y="6" width="1" height="1" fill="#000"/><rect x="9" y="6" width="1" height="1" fill="#fff"/><rect x="10" y="6" width="1" height="1" fill="#000"/><rect x="11" y="6" width="4" height="1" fill="#fff"/><rect x="15" y="6" width="1" height="1" fill="#000"/><rect x="0" y="7" width="1" height="1" fill="#00f"/><rect x="1" y="7" width="1" height="1" fill="#fff"/><rect x="2" y="7" width="2" height="1" fill="#000"/><rect x="4" y="7" width="1" height="1" fill="#fff"/><rect x="5" y="7" width="1" height="1" fill="#000"/><rect x="6" y="7" width="1" height="1" fill="#fff"/><rect x="7" y="7" width="2" height="1" fill="#000"/><rect x="9" y="7" width="1" height="1" fill="#fff"/><rect x="10" y="7" width="1" height="1" fill="#00f"/><rect x="11" y="7" width="1" height="1" fill="#fff"/><rect x="12" y="7" width="2" height="1" fill="#808080"/><rect x="14" y="7" width="1" height="1" fill="#fff"/><rect x="15" y="7" width="1" height="1" fill="#000"/><rect x="0" y="8" width="1" height="1" fill="#000"/><rect x="1" y="8" width="2" height="1" fill="#fff"/><rect x="3" y="8" width="1" height="1" fill="#000"/><rect x="4" y="8" width="3" height="1" fill="#fff"/><rect x="7" y="8" width="1" height="1" fill="#000"/><rect x="8" y="8" width="2" height="1" fill="#fff"/><rect x="10" y="8" width="1" height="1" fill="#000"/><rect x="11" y="8" width="4" height="1" fill="#fff"/><rect x="15" y="8" width="1" height="1" fill="#000"/><rect x="0" y="9" width="1" height="1" fill="#00f"/><rect x="1" y="9" width="9" height="1" fill="#fff"/><rect x="10" y="9" width="1" height="1" fill="#00f"/><rect x="11" y="9" width="1" height="1" fill="#fff"/><rect x="12" y="9" width="2" height="1" fill="#808080"/><rect x="14" y="9" width="1" height="1" fill="#fff"/><rect x="15" y="9" width="1" height="1" fill="#000"/><rect x="0" y="10" width="1" height="1" fill="#000"/><rect x="1" y="10" width="1" height="1" fill="#00f"/><rect x="2" y="10" width="1" height="1" fill="#000"/><rect x="3" y="10" width="1" height="1" fill="#00f"/><rect x="4" y="10" width="1" height="1" fill="#000"/><rect x="5" y="10" width="1" height="1" fill="#00f"/><rect x="6" y="10" width="1" height="1" fill="#000"/><rect x="7" y="10" width="1" height="1" fill="#00f"/><rect x="8" y="10" width="1" height="1" fill="#000"/><rect x="9" y="10" width="1" height="1" fill="#00f"/><rect x="10" y="10" width="1" height="1" fill="#000"/><rect x="11" y="10" width="4" height="1" fill="#fff"/><rect x="15" y="10" width="1" height="1" fill="#000"/><rect x="3" y="11" width="1" height="1" fill="#808080"/><rect x="4" y="11" width="8" height="1" fill="#fff"/><rect x="12" y="11" width="2" height="1" fill="#808080"/><rect x="14" y="11" width="1" height="1" fill="#fff"/><rect x="15" y="11" width="1" height="1" fill="#000"/><rect x="3" y="12" width="1" height="1" fill="#808080"/><rect x="4" y="12" width="11" height="1" fill="#fff"/><rect x="15" y="12" width="1" height="1" fill="#000"/><rect x="3" y="13" width="1" height="1" fill="#808080"/><rect x="4" y="13" width="11" height="1" fill="#fff"/><rect x="15" y="13" width="1" height="1" fill="#000"/><rect x="3" y="14" width="13" height="1" fill="#000"/></svg>
<div style="left:498px;top:576px;width:143px;height:22px;background-color:#fff;background-image:linear-gradient(45deg,#c0c0c0 25%,transparent 25%,transparent 75%,#c0c0c0 75%),linear-gradient(45deg,#c0c0c0 25%,transparent 25%,transparent 75%,#c0c0c0 75%);background-size:2px 2px;background-position:0 0,1px 1px;box-shadow:inset -1px -1px #fff,inset 1px 1px #000,inset 2px 2px #808080,inset -2px -2px #dfdfdf"></div>
<svg style="left:502px;top:579px" width="16" height="17" shape-rendering="crispEdges"><rect x="4" y="1" width="1" height="1" fill="#808080"/><rect x="4" y="3" width="1" height="1" fill="#ff0"/><rect x="7" y="3" width="1" height="1" fill="#808080"/><rect x="3" y="4" width="2" height="1" fill="#ff0"/><rect x="5" y="4" width="1" height="1" fill="#f0f"/><rect x="2" y="5" width="2" height="1" fill="#ff0"/><rect x="4" y="5" width="1" height="1" fill="#f00"/><rect x="5" y="5" width="2" height="1" fill="#ff0"/><rect x="2" y="6" width="3" height="1" fill="#ff0"/><rect x="5" y="6" width="2" height="1" fill="#f00"/><rect x="1" y="7" width="6" height="1" fill="#ff0"/><rect x="7" y="7" width="1" height="1" fill="#f00"/><rect x="1" y="8" width="2" height="1" fill="#ff0"/><rect x="3" y="8" width="1" height="1" fill="#f0f"/><rect x="4" y="8" width="3" height="1" fill="#ff0"/><rect x="7" y="8" width="1" height="1" fill="#f00"/><rect x="1" y="9" width="3" height="1" fill="#ff0"/><rect x="4" y="9" width="3" height="1" fill="#f00"/><rect x="7" y="9" width="1" height="1" fill="#ff0"/><rect x="1" y="10" width="3" height="1" fill="#ff0"/><rect x="4" y="10" width="4" height="1" fill="#f00"/><rect x="2" y="11" width="1" height="1" fill="#ff0"/><rect x="3" y="11" width="5" height="1" fill="#f00"/><rect x="8" y="11" width="2" height="1" fill="#808000"/><rect x="10" y="11" width="1" height="1" fill="#000"/><rect x="2" y="12" width="1" height="1" fill="#ff0"/><rect x="3" y="12" width="5" height="1" fill="#f00"/><rect x="8" y="12" width="5" height="1" fill="#808000"/><rect x="13" y="12" width="1" height="1" fill="#000"/><rect x="3" y="13" width="1" height="1" fill="#000"/><rect x="4" y="13" width="4" height="1" fill="#f00"/><rect x="8" y="13" width="7" height="1" fill="#808000"/><rect x="8" y="14" width="2" height="1" fill="#000"/><rect x="10" y="14" width="6" height="1" fill="#808000"/><rect x="11" y="15" width="2" height="1" fill="#000"/><rect x="13" y="15" width="3" height="1" fill="#808000"/><rect x="14" y="16" width="2" height="1" fill="#000"/></svg>
<div class="t " style="left:520px;top:581px;color:#000;font-weight:bold;"><i style="width:7px">0</i><i style="width:7px">0</i><i style="width:8px">2</i><i style="width:7px">5</i><i style="width:7px">5</i><i style="width:7px">6</i><i style="width:7px">3</i><i style="width:5px">-</i><i style="width:7px">0</i><i style="width:7px">0</i><i style="width:7px">0</i><i style="width:3px">&nbsp;</i><i style="width:4px">I</i><i style="width:7px">n</i><i style="width:7px">c</i><i style="width:3px">i</i><i style="width:7px">d</i><i style="width:4px">.</i><i style="width:3px">.</i><i style="width:3px">.</i></div>
<div style="left:649px;top:576px;width:149px;height:22px;box-shadow:inset 1px 1px #808080,inset -1px -1px #fff"></div>
<svg style="left:652px;top:579px" width="16" height="16" shape-rendering="crispEdges"><rect x="0" y="0" width="16" height="1" fill="#fff"/><rect x="0" y="1" width="16" height="1" fill="#fff"/><rect x="0" y="2" width="3" height="1" fill="#fff"/><rect x="3" y="2" width="13" height="1" fill="#00f"/><rect x="0" y="3" width="3" height="1" fill="#fff"/><rect x="3" y="3" width="13" height="1" fill="#00f"/><rect x="0" y="4" width="3" height="1" fill="#fff"/><rect x="3" y="4" width="13" height="1" fill="#00f"/><rect x="0" y="5" width="3" height="1" fill="#fff"/><rect x="3" y="5" width="13" height="1" fill="#00f"/><rect x="0" y="6" width="3" height="1" fill="#fff"/><rect x="3" y="6" width="13" height="1" fill="#00f"/><rect x="0" y="7" width="3" height="1" fill="#fff"/><rect x="3" y="7" width="13" height="1" fill="#00f"/><rect x="0" y="8" width="3" height="1" fill="#fff"/><rect x="3" y="8" width="13" height="1" fill="#00f"/><rect x="0" y="9" width="2" height="1" fill="#00f"/><rect x="2" y="9" width="1" height="1" fill="#fff"/><rect x="3" y="9" width="1" height="1" fill="#00f"/><rect x="4" y="9" width="3" height="1" fill="#fff"/><rect x="7" y="9" width="9" height="1" fill="#00f"/><rect x="0" y="10" width="2" height="1" fill="#fff"/><rect x="2" y="10" width="1" height="1" fill="#00f"/><rect x="3" y="10" width="1" height="1" fill="#fff"/><rect x="4" y="10" width="4" height="1" fill="#00f"/><rect x="8" y="10" width="7" height="1" fill="#fff"/><rect x="15" y="10" width="1" height="1" fill="#00f"/><rect x="0" y="11" width="2" height="1" fill="#00f"/><rect x="2" y="11" width="2" height="1" fill="#fff"/><rect x="4" y="11" width="4" height="1" fill="#00f"/><rect x="8" y="11" width="1" height="1" fill="#fff"/><rect x="9" y="11" width="1" height="1" fill="#00f"/><rect x="10" y="11" width="2" height="1" fill="#fff"/><rect x="12" y="11" width="1" height="1" fill="#00f"/><rect x="13" y="11" width="1" height="1" fill="#fff"/><rect x="14" y="11" width="1" height="1" fill="#00f"/><rect x="15" y="11" width="1" height="1" fill="#fff"/><rect x="0" y="12" width="2" height="1" fill="#fff"/><rect x="2" y="12" width="1" height="1" fill="#00f"/><rect x="3" y="12" width="1" height="1" fill="#fff"/><rect x="4" y="12" width="4" height="1" fill="#00f"/><rect x="8" y="12" width="1" height="1" fill="#fff"/><rect x="9" y="12" width="1" height="1" fill="#00f"/><rect x="10" y="12" width="2" height="1" fill="#fff"/><rect x="12" y="12" width="1" height="1" fill="#00f"/><rect x="13" y="12" width="1" height="1" fill="#fff"/><rect x="14" y="12" width="1" height="1" fill="#00f"/><rect x="15" y="12" width="1" height="1" fill="#fff"/><rect x="0" y="13" width="2" height="1" fill="#00f"/><rect x="2" y="13" width="1" height="1" fill="#fff"/><rect x="3" y="13" width="1" height="1" fill="#00f"/><rect x="4" y="13" width="3" height="1" fill="#fff"/><rect x="7" y="13" width="1" height="1" fill="#00f"/><rect x="8" y="13" width="4" height="1" fill="#fff"/><rect x="12" y="13" width="1" height="1" fill="#00f"/><rect x="13" y="13" width="1" height="1" fill="#fff"/><rect x="14" y="13" width="1" height="1" fill="#00f"/><rect x="15" y="13" width="1" height="1" fill="#fff"/><rect x="0" y="14" width="3" height="1" fill="#fff"/><rect x="3" y="14" width="13" height="1" fill="#00f"/><rect x="0" y="15" width="3" height="1" fill="#fff"/><rect x="3" y="15" width="13" height="1" fill="#00f"/></svg>
<svg style="left:669px;top:579px" width="16" height="15" shape-rendering="crispEdges"><rect x="0" y="0" width="7" height="1" fill="#000"/><rect x="8" y="0" width="5" height="1" fill="#000"/><rect x="1" y="1" width="1" height="1" fill="#000"/><rect x="2" y="1" width="4" height="1" fill="#fff"/><rect x="6" y="1" width="1" height="1" fill="#000"/><rect x="9" y="1" width="1" height="1" fill="#000"/><rect x="10" y="1" width="2" height="1" fill="#fff"/><rect x="12" y="1" width="1" height="1" fill="#000"/><rect x="1" y="2" width="1" height="1" fill="#000"/><rect x="2" y="2" width="5" height="1" fill="#fff"/><rect x="7" y="2" width="1" height="1" fill="#000"/><rect x="9" y="2" width="1" height="1" fill="#000"/><rect x="10" y="2" width="1" height="1" fill="#fff"/><rect x="11" y="2" width="1" height="1" fill="#000"/><rect x="2" y="3" width="1" height="1" fill="#000"/><rect x="3" y="3" width="4" height="1" fill="#fff"/><rect x="7" y="3" width="1" height="1" fill="#000"/><rect x="9" y="3" width="1" height="1" fill="#000"/><rect x="10" y="3" width="1" height="1" fill="#fff"/><rect x="11" y="3" width="1" height="1" fill="#000"/><rect x="2" y="4" width="1" height="1" fill="#000"/><rect x="3" y="4" width="5" height="1" fill="#fff"/><rect x="8" y="4" width="1" height="1" fill="#000"/><rect x="9" y="4" width="1" height="1" fill="#fff"/><rect x="10" y="4" width="1" height="1" fill="#000"/><rect x="3" y="5" width="1" height="1" fill="#000"/><rect x="4" y="5" width="4" height="1" fill="#fff"/><rect x="8" y="5" width="1" height="1" fill="#000"/><rect x="9" y="5" width="1" height="1" fill="#fff"/><rect x="10" y="5" width="1" height="1" fill="#000"/><rect x="3" y="6" width="1" height="1" fill="#000"/><rect x="4" y="6" width="5" height="1" fill="#fff"/><rect x="9" y="6" width="1" height="1" fill="#000"/><rect x="14" y="6" width="1" height="1" fill="#000"/><rect x="4" y="7" width="1" height="1" fill="#000"/><rect x="5" y="7" width="4" height="1" fill="#fff"/><rect x="9" y="7" width="1" height="1" fill="#000"/><rect x="13" y="7" width="2" height="1" fill="#000"/><rect x="4" y="8" width="1" height="1" fill="#000"/><rect x="5" y="8" width="3" height="1" fill="#fff"/><rect x="8" y="8" width="1" height="1" fill="#000"/><rect x="12" y="8" width="1" height="1" fill="#000"/><rect x="13" y="8" width="1" height="1" fill="#ff0"/><rect x="14" y="8" width="1" height="1" fill="#000"/><rect x="5" y="9" width="1" height="1" fill="#000"/><rect x="6" y="9" width="2" height="1" fill="#fff"/><rect x="8" y="9" width="1" height="1" fill="#000"/><rect x="11" y="9" width="1" height="1" fill="#000"/><rect x="12" y="9" width="2" height="1" fill="#ff0"/><rect x="14" y="9" width="1" height="1" fill="#000"/><rect x="5" y="10" width="1" height="1" fill="#000"/><rect x="6" y="10" width="2" height="1" fill="#fff"/><rect x="8" y="10" width="1" height="1" fill="#000"/><rect x="10" y="10" width="1" height="1" fill="#000"/><rect x="11" y="10" width="3" height="1" fill="#ff0"/><rect x="14" y="10" width="1" height="1" fill="#000"/><rect x="6" y="11" width="1" height="1" fill="#000"/><rect x="7" y="11" width="1" height="1" fill="#fff"/><rect x="8" y="11" width="1" height="1" fill="#000"/><rect x="11" y="11" width="1" height="1" fill="#000"/><rect x="12" y="11" width="2" height="1" fill="#ff0"/><rect x="14" y="11" width="1" height="1" fill="#000"/><rect x="6" y="12" width="2" height="1" fill="#000"/><rect x="12" y="12" width="1" height="1" fill="#000"/><rect x="13" y="12" width="1" height="1" fill="#ff0"/><rect x="14" y="12" width="1" height="1" fill="#000"/><rect x="7" y="13" width="1" height="1" fill="#000"/><rect x="13" y="13" width="2" height="1" fill="#000"/><rect x="14" y="14" width="1" height="1" fill="#000"/></svg>
<svg style="left:686px;top:579px" width="16" height="16" shape-rendering="crispEdges"><rect x="0" y="0" width="15" height="1" fill="#fff"/><rect x="15" y="0" width="1" height="1" fill="#000"/><rect x="0" y="1" width="2" height="1" fill="#fff"/><rect x="2" y="1" width="2" height="1" fill="#008000"/><rect x="4" y="1" width="6" height="1" fill="#fff"/><rect x="10" y="1" width="1" height="1" fill="#008000"/><rect x="11" y="1" width="4" height="1" fill="#fff"/><rect x="15" y="1" width="1" height="1" fill="#000"/><rect x="0" y="2" width="3" height="1" fill="#fff"/><rect x="3" y="2" width="1" height="1" fill="#008000"/><rect x="4" y="2" width="5" height="1" fill="#fff"/><rect x="9" y="2" width="2" height="1" fill="#008000"/><rect x="11" y="2" width="4" height="1" fill="#fff"/><rect x="15" y="2" width="1" height="1" fill="#000"/><rect x="0" y="3" width="2" height="1" fill="#fff"/><rect x="2" y="3" width="7" height="1" fill="#000"/><rect x="9" y="3" width="1" height="1" fill="#008000"/><rect x="10" y="3" width="6" height="1" fill="#000"/><rect x="0" y="4" width="2" height="1" fill="#fff"/><rect x="2" y="4" width="2" height="1" fill="#000"/><rect x="4" y="4" width="3" height="1" fill="#fff"/><rect x="7" y="4" width="1" height="1" fill="#000"/><rect x="8" y="4" width="1" height="1" fill="#008000"/><rect x="9" y="4" width="2" height="1" fill="#000"/><rect x="11" y="4" width="4" height="1" fill="#fff"/><rect x="15" y="4" width="1" height="1" fill="#000"/><rect x="0" y="5" width="2" height="1" fill="#fff"/><rect x="2" y="5" width="2" height="1" fill="#000"/><rect x="4" y="5" width="1" height="1" fill="#fff"/><rect x="5" y="5" width="1" height="1" fill="#008000"/><rect x="6" y="5" width="1" height="1" fill="#fff"/><rect x="7" y="5" width="1" height="1" fill="#000"/><rect x="8" y="5" width="1" height="1" fill="#008000"/><rect x="9" y="5" width="1" height="1" fill="#000"/><rect x="10" y="5" width="5" height="1" fill="#fff"/><rect x="15" y="5" width="1" height="1" fill="#000"/><rect x="0" y="6" width="2" height="1" fill="#fff"/><rect x="2" y="6" width="2" height="1" fill="#000"/><rect x="4" y="6" width="1" height="1" fill="#fff"/><rect x="5" y="6" width="2" height="1" fill="#008000"/><rect x="7" y="6" width="3" height="1" fill="#000"/><rect x="10" y="6" width="5" height="1" fill="#fff"/><rect x="15" y="6" width="1" height="1" fill="#000"/><rect x="0" y="7" width="2" height="1" fill="#fff"/><rect x="2" y="7" width="2" height="1" fill="#000"/><rect x="4" y="7" width="2" height="1" fill="#fff"/><rect x="6" y="7" width="2" height="1" fill="#008000"/><rect x="8" y="7" width="2" height="1" fill="#000"/><rect x="10" y="7" width="5" height="1" fill="#fff"/><rect x="15" y="7" width="1" height="1" fill="#000"/><rect x="0" y="8" width="2" height="1" fill="#fff"/><rect x="2" y="8" width="2" height="1" fill="#000"/><rect x="4" y="8" width="3" height="1" fill="#fff"/><rect x="7" y="8" width="1" height="1" fill="#008000"/><rect x="8" y="8" width="8" height="1" fill="#000"/><rect x="0" y="9" width="7" height="1" fill="#fff"/><rect x="7" y="9" width="1" height="1" fill="#008000"/><rect x="8" y="9" width="2" height="1" fill="#fff"/><rect x="10" y="9" width="6" height="1" fill="#000"/><rect x="0" y="10" width="8" height="1" fill="#fff"/><rect x="8" y="10" width="1" height="1" fill="#008000"/><rect x="9" y="10" width="6" height="1" fill="#fff"/><rect x="15" y="10" width="1" height="1" fill="#000"/><rect x="0" y="11" width="15" height="1" fill="#fff"/><rect x="15" y="11" width="1" height="1" fill="#000"/><rect x="0" y="12" width="8" height="1" fill="#fff"/><rect x="8" y="12" width="7" height="1" fill="#000080"/><rect x="15" y="12" width="1" height="1" fill="#000"/><rect x="0" y="13" width="15" height="1" fill="#fff"/><rect x="15" y="13" width="1" height="1" fill="#000"/><rect x="0" y="14" width="15" height="1" fill="#fff"/><rect x="15" y="14" width="1" height="1" fill="#000"/><rect x="0" y="15" width="16" height="1" fill="#000"/></svg>
<svg style="left:704px;top:580px" width="16" height="14" shape-rendering="crispEdges"><rect x="2" y="0" width="13" height="1" fill="#000"/><rect x="1" y="1" width="1" height="1" fill="#000"/><rect x="2" y="1" width="12" height="1" fill="#404040"/><rect x="14" y="1" width="1" height="1" fill="#000"/><rect x="0" y="2" width="1" height="1" fill="#000"/><rect x="1" y="2" width="1" height="1" fill="#404040"/><rect x="2" y="2" width="11" height="1" fill="#000"/><rect x="13" y="2" width="1" height="1" fill="#404040"/><rect x="14" y="2" width="1" height="1" fill="#000"/><rect x="0" y="3" width="1" height="1" fill="#000"/><rect x="1" y="3" width="1" height="1" fill="#404040"/><rect x="2" y="3" width="1" height="1" fill="#000"/><rect x="3" y="3" width="2" height="1" fill="#808080"/><rect x="5" y="3" width="4" height="1" fill="#000"/><rect x="9" y="3" width="2" height="1" fill="#808080"/><rect x="11" y="3" width="2" height="1" fill="#000"/><rect x="13" y="3" width="1" height="1" fill="#404040"/><rect x="14" y="3" width="1" height="1" fill="#000"/><rect x="0" y="4" width="1" height="1" fill="#000"/><rect x="1" y="4" width="1" height="1" fill="#404040"/><rect x="2" y="4" width="1" height="1" fill="#000"/><rect x="3" y="4" width="1" height="1" fill="#808080"/><rect x="4" y="4" width="1" height="1" fill="#000"/><rect x="5" y="4" width="1" height="1" fill="#0ff"/><rect x="6" y="4" width="1" height="1" fill="#000"/><rect x="7" y="4" width="1" height="1" fill="#808080"/><rect x="8" y="4" width="2" height="1" fill="#000"/><rect x="10" y="4" width="1" height="1" fill="#808080"/><rect x="11" y="4" width="2" height="1" fill="#000"/><rect x="13" y="4" width="1" height="1" fill="#404040"/><rect x="14" y="4" width="1" height="1" fill="#000"/><rect x="0" y="5" width="1" height="1" fill="#000"/><rect x="1" y="5" width="1" height="1" fill="#404040"/><rect x="2" y="5" width="1" height="1" fill="#000"/><rect x="3" y="5" width="1" height="1" fill="#808080"/><rect x="4" y="5" width="6" height="1" fill="#000"/><rect x="10" y="5" width="1" height="1" fill="#808080"/><rect x="11" y="5" width="2" height="1" fill="#000"/><rect x="13" y="5" width="1" height="1" fill="#404040"/><rect x="14" y="5" width="1" height="1" fill="#000"/><rect x="0" y="6" width="1" height="1" fill="#000"/><rect x="1" y="6" width="1" height="1" fill="#404040"/><rect x="2" y="6" width="1" height="1" fill="#000"/><rect x="3" y="6" width="2" height="1" fill="#808080"/><rect x="5" y="6" width="4" height="1" fill="#000"/><rect x="9" y="6" width="2" height="1" fill="#808080"/><rect x="11" y="6" width="2" height="1" fill="#000"/><rect x="13" y="6" width="1" height="1" fill="#404040"/><rect x="14" y="6" width="1" height="1" fill="#000"/><rect x="0" y="7" width="1" height="1" fill="#000"/><rect x="1" y="7" width="1" height="1" fill="#404040"/><rect x="2" y="7" width="11" height="1" fill="#000"/><rect x="13" y="7" width="1" height="1" fill="#404040"/><rect x="14" y="7" width="1" height="1" fill="#000"/><rect x="0" y="8" width="1" height="1" fill="#000"/><rect x="1" y="8" width="13" height="1" fill="#404040"/><rect x="14" y="8" width="1" height="1" fill="#000"/><rect x="1" y="9" width="13" height="1" fill="#000"/><rect x="6" y="10" width="1" height="1" fill="#000"/><rect x="7" y="10" width="1" height="1" fill="#0ff"/><rect x="8" y="10" width="1" height="1" fill="#000"/><rect x="7" y="11" width="1" height="1" fill="#000"/><rect x="8" y="11" width="2" height="1" fill="#0ff"/><rect x="10" y="11" width="1" height="1" fill="#000"/><rect x="8" y="12" width="2" height="1" fill="#000"/><rect x="10" y="12" width="2" height="1" fill="#008000"/><rect x="12" y="12" width="1" height="1" fill="#000"/><rect x="11" y="13" width="2" height="1" fill="#000"/></svg>
<svg style="left:720px;top:579px" width="16" height="15" shape-rendering="crispEdges"><rect x="5" y="0" width="5" height="1" fill="#f00"/><rect x="11" y="0" width="4" height="1" fill="#00f"/><rect x="3" y="1" width="2" height="1" fill="#f00"/><rect x="10" y="1" width="2" height="1" fill="#00f"/><rect x="14" y="1" width="2" height="1" fill="#00f"/><rect x="2" y="2" width="1" height="1" fill="#f00"/><rect x="9" y="2" width="2" height="1" fill="#00f"/><rect x="15" y="2" width="1" height="1" fill="#00f"/><rect x="1" y="3" width="1" height="1" fill="#f00"/><rect x="8" y="3" width="3" height="1" fill="#00f"/><rect x="15" y="3" width="1" height="1" fill="#00f"/><rect x="1" y="4" width="1" height="1" fill="#f00"/><rect x="7" y="4" width="4" height="1" fill="#00f"/><rect x="15" y="4" width="1" height="1" fill="#00f"/><rect x="0" y="5" width="1" height="1" fill="#f00"/><rect x="15" y="5" width="1" height="1" fill="#00f"/><rect x="0" y="6" width="1" height="1" fill="#f00"/><rect x="15" y="6" width="1" height="1" fill="#00f"/><rect x="0" y="7" width="1" height="1" fill="#f00"/><rect x="15" y="7" width="1" height="1" fill="#00f"/><rect x="0" y="8" width="1" height="1" fill="#f00"/><rect x="15" y="8" width="1" height="1" fill="#00f"/><rect x="0" y="9" width="1" height="1" fill="#f00"/><rect x="15" y="9" width="1" height="1" fill="#00f"/><rect x="1" y="10" width="1" height="1" fill="#f00"/><rect x="14" y="10" width="1" height="1" fill="#00f"/><rect x="1" y="11" width="1" height="1" fill="#f00"/><rect x="5" y="11" width="1" height="1" fill="#f00"/><rect x="13" y="11" width="1" height="1" fill="#00f"/><rect x="2" y="12" width="1" height="1" fill="#f00"/><rect x="4" y="12" width="2" height="1" fill="#f00"/><rect x="12" y="12" width="1" height="1" fill="#00f"/><rect x="3" y="13" width="3" height="1" fill="#f00"/><rect x="10" y="13" width="2" height="1" fill="#00f"/><rect x="2" y="14" width="4" height="1" fill="#f00"/><rect x="7" y="14" width="3" height="1" fill="#00f"/></svg>
<div class="t " style="left:746px;top:581px;color:#000;"><i style="width:6px">1</i><i style="width:3px">:</i><i style="width:6px">1</i><i style="width:7px">3</i><i style="width:3px">&nbsp;</i><i style="width:7px">P</i><i style="width:10px">M</i></div></body></html>
